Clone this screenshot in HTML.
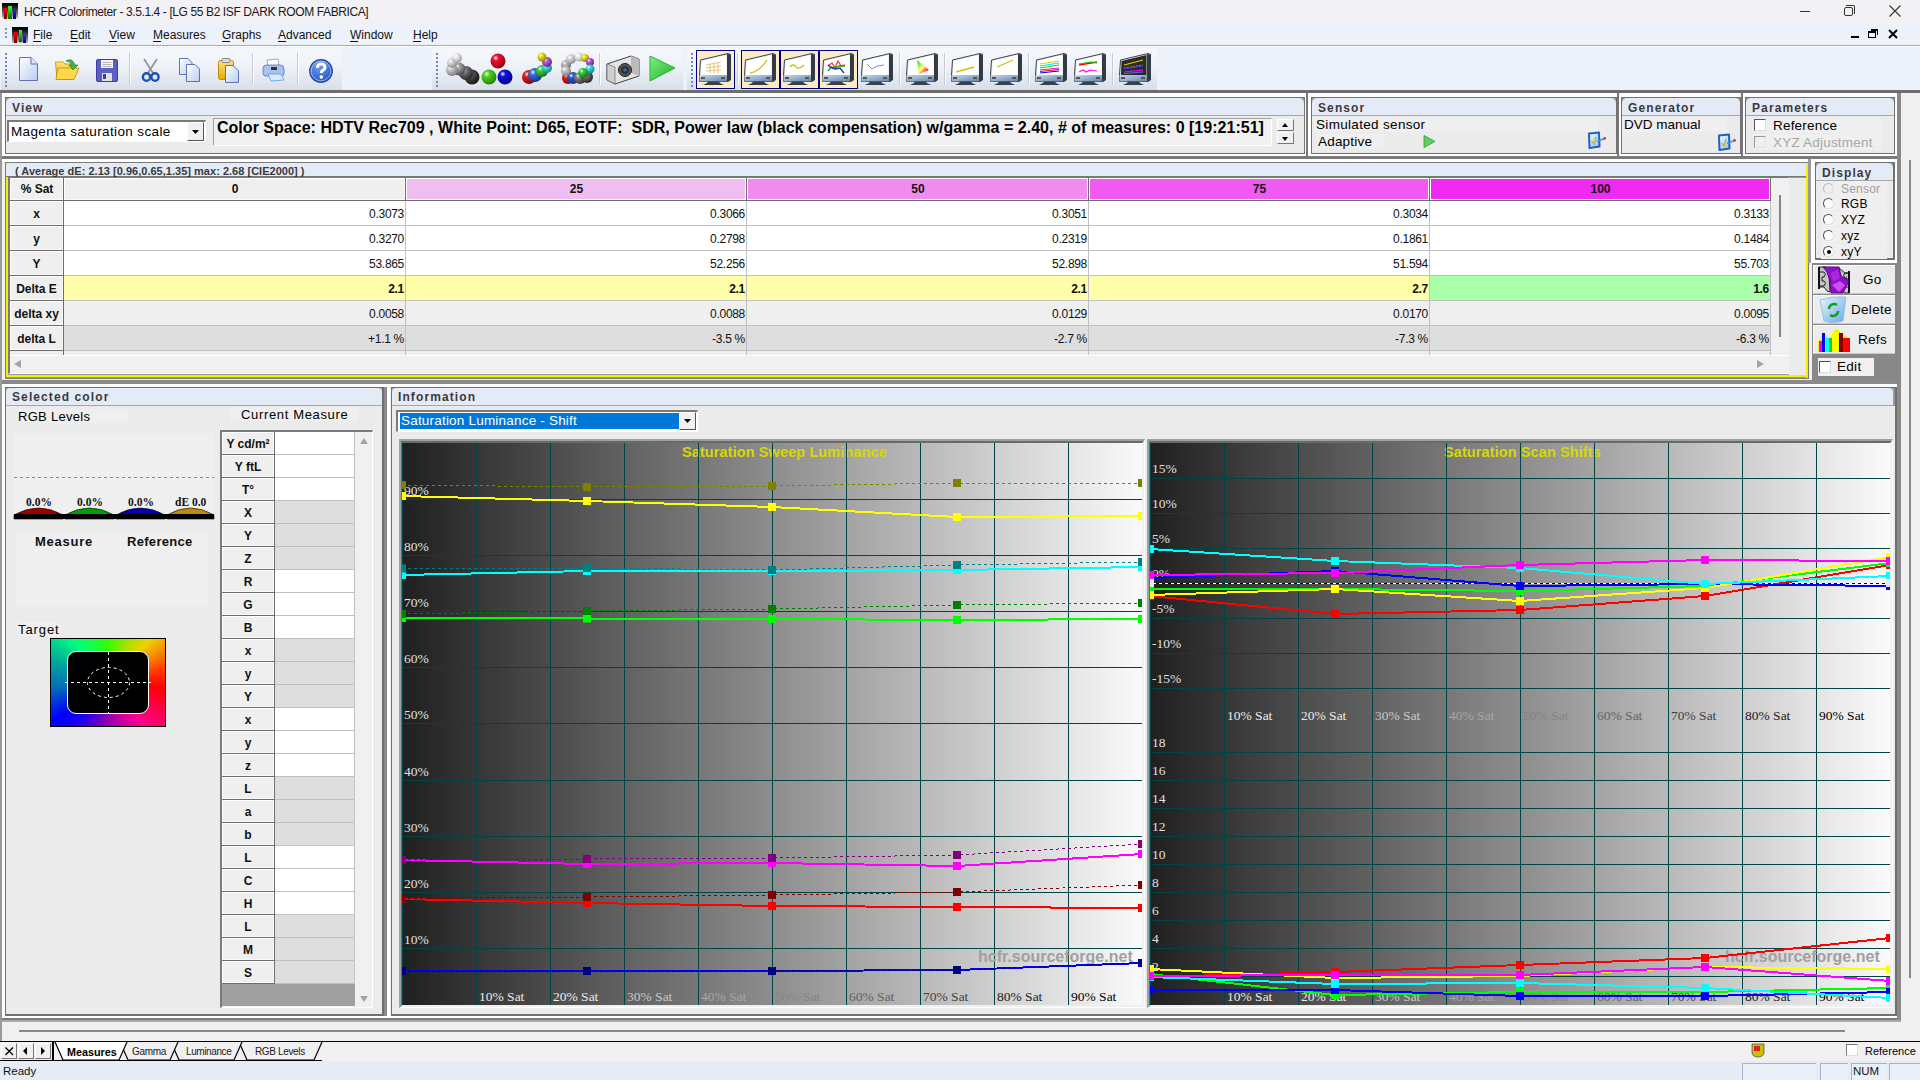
<!DOCTYPE html>
<html><head><meta charset="utf-8">
<style>
*{margin:0;padding:0;box-sizing:border-box}
html,body{width:1920px;height:1080px;overflow:hidden;background:#f0f0f0;font-family:"Liberation Sans",sans-serif;color:#000}
.a{position:absolute}
.t{position:absolute;white-space:nowrap;line-height:1}
.b{font-weight:bold}
.ser{font-family:"Liberation Serif",serif}
.ph{position:absolute;background:#e4ebf6;border-bottom:1px solid #a0a0a0;border-radius:6px 6px 0 0}
.pht{position:absolute;white-space:nowrap;line-height:1;font-weight:bold;font-size:12px;color:#3a3a3a;letter-spacing:1.1px}
svg{position:absolute;overflow:visible}
</style></head><body>

<div class="a" style="left:0;top:0;width:1920px;height:23px;background:#f2f1f4"></div>
<div class="a" style="left:2px;top:3px;width:16px;height:16px;background:linear-gradient(#000,#111 20%,rgba(0,0,0,0.35) 85%,rgba(0,0,0,0))">
<div class="a" style="left:2px;top:5px;width:3px;height:11px;background:linear-gradient(#f00,#700)"></div>
<div class="a" style="left:6px;top:3px;width:4px;height:13px;background:linear-gradient(#3f3,#060)"></div>
<div class="a" style="left:11px;top:6px;width:3px;height:10px;background:linear-gradient(#22f,#006)"></div></div>
<div class="t" style="left:24px;top:6px;font-size:12px;color:#1a1a1a;letter-spacing:-0.39px">HCFR Colorimeter - 3.5.1.4 - [LG 55 B2 ISF DARK ROOM FABRICA]</div>
<div class="a" style="left:1800px;top:11px;width:10px;height:1px;background:#333"></div>
<div class="a" style="left:1844px;top:7px;width:9px;height:9px;border:1px solid #333;border-radius:2px"></div><div class="a" style="left:1846px;top:5px;width:9px;height:9px;border-top:1px solid #333;border-right:1px solid #333;border-radius:0 2px 0 0"></div>
<svg style="left:1889px;top:5px" width="12" height="12"><path d="M0.5 0.5L11.5 11.5M11.5 0.5L0.5 11.5" stroke="#333" stroke-width="1.1"/></svg>
<div class="a" style="left:0;top:23px;width:1920px;height:22px;background:#edf2fa"></div>
<div class="a" style="left:0;top:45px;width:1920px;height:1px;background:#a9abae"></div>
<div class="a" style="left:0;top:46px;width:1920px;height:1px;background:#fff"></div>
<div class="a" style="left:5px;top:28px;width:2px;height:2px;background:#7a96c0"></div>
<div class="a" style="left:5px;top:32px;width:2px;height:2px;background:#7a96c0"></div>
<div class="a" style="left:5px;top:36px;width:2px;height:2px;background:#7a96c0"></div>
<div class="a" style="left:12px;top:27px;width:16px;height:16px;background:linear-gradient(#000,#111 20%,rgba(0,0,0,0.4) 85%,rgba(0,0,0,0.1))">
<div class="a" style="left:2px;top:5px;width:3px;height:11px;background:linear-gradient(#f00,#700)"></div>
<div class="a" style="left:7px;top:3px;width:3px;height:12px;background:linear-gradient(#3f3,#060)"></div>
<div class="a" style="left:11px;top:6px;width:3px;height:10px;background:linear-gradient(#33f,#008)"></div></div>
<div class="t" style="left:33px;top:29px;font-size:12px;color:#111;width:20px">File</div>
<div class="a" style="left:33px;top:41px;width:8px;height:1px;background:#111"></div>
<div class="t" style="left:70px;top:29px;font-size:12px;color:#111;width:22px">Edit</div>
<div class="a" style="left:70px;top:41px;width:8px;height:1px;background:#111"></div>
<div class="t" style="left:109px;top:29px;font-size:12px;color:#111;width:27px">View</div>
<div class="a" style="left:109px;top:41px;width:8px;height:1px;background:#111"></div>
<div class="t" style="left:153px;top:29px;font-size:12px;color:#111;width:52px">Measures</div>
<div class="a" style="left:153px;top:41px;width:8px;height:1px;background:#111"></div>
<div class="t" style="left:222px;top:29px;font-size:12px;color:#111;width:39px">Graphs</div>
<div class="a" style="left:222px;top:41px;width:8px;height:1px;background:#111"></div>
<div class="t" style="left:278px;top:29px;font-size:12px;color:#111;width:55px">Advanced</div>
<div class="a" style="left:278px;top:41px;width:8px;height:1px;background:#111"></div>
<div class="t" style="left:350px;top:29px;font-size:12px;color:#111;width:46px">Window</div>
<div class="a" style="left:350px;top:41px;width:8px;height:1px;background:#111"></div>
<div class="t" style="left:413px;top:29px;font-size:12px;color:#111;width:26px">Help</div>
<div class="a" style="left:413px;top:41px;width:8px;height:1px;background:#111"></div>
<div class="a" style="left:1851px;top:36px;width:8px;height:2px;background:#000"></div>
<div class="a" style="left:1868px;top:31px;width:8px;height:7px;border:1px solid #000;border-top-width:2px"></div><div class="a" style="left:1871px;top:29px;width:7px;height:6px;border-top:2px solid #000;border-right:1px solid #000"></div>
<svg style="left:1888px;top:29px" width="10" height="10"><path d="M1 1L9 9M9 1L1 9" stroke="#000" stroke-width="2"/></svg>
<div class="a" style="left:0;top:47px;width:1920px;height:43px;background:#edf2fa"></div>
<div class="a" style="left:1px;top:48px;width:341px;height:42px;border-radius:4px 4px 0 0;background:linear-gradient(#f5f7fb,#eef2f8 45%,#d8dee8)"></div>
<div class="a" style="left:432px;top:48px;width:251px;height:42px;border-radius:4px 4px 0 0;background:linear-gradient(#f5f7fb,#eef2f8 45%,#d8dee8)"></div>
<div class="a" style="left:687px;top:48px;width:470px;height:42px;border-radius:4px 4px 0 0;background:linear-gradient(#f5f7fb,#eef2f8 45%,#d8dee8)"></div>
<div class="a" style="left:5px;top:53px;width:2px;height:2px;background:#6a8ab8"></div>
<div class="a" style="left:5px;top:57px;width:2px;height:2px;background:#6a8ab8"></div>
<div class="a" style="left:5px;top:61px;width:2px;height:2px;background:#6a8ab8"></div>
<div class="a" style="left:5px;top:65px;width:2px;height:2px;background:#6a8ab8"></div>
<div class="a" style="left:5px;top:69px;width:2px;height:2px;background:#6a8ab8"></div>
<div class="a" style="left:5px;top:73px;width:2px;height:2px;background:#6a8ab8"></div>
<div class="a" style="left:5px;top:77px;width:2px;height:2px;background:#6a8ab8"></div>
<div class="a" style="left:5px;top:81px;width:2px;height:2px;background:#6a8ab8"></div>
<div class="a" style="left:5px;top:85px;width:2px;height:2px;background:#6a8ab8"></div>
<div class="a" style="left:436px;top:53px;width:2px;height:2px;background:#6a8ab8"></div>
<div class="a" style="left:436px;top:57px;width:2px;height:2px;background:#6a8ab8"></div>
<div class="a" style="left:436px;top:61px;width:2px;height:2px;background:#6a8ab8"></div>
<div class="a" style="left:436px;top:65px;width:2px;height:2px;background:#6a8ab8"></div>
<div class="a" style="left:436px;top:69px;width:2px;height:2px;background:#6a8ab8"></div>
<div class="a" style="left:436px;top:73px;width:2px;height:2px;background:#6a8ab8"></div>
<div class="a" style="left:436px;top:77px;width:2px;height:2px;background:#6a8ab8"></div>
<div class="a" style="left:436px;top:81px;width:2px;height:2px;background:#6a8ab8"></div>
<div class="a" style="left:436px;top:85px;width:2px;height:2px;background:#6a8ab8"></div>
<div class="a" style="left:691px;top:53px;width:2px;height:2px;background:#6a8ab8"></div>
<div class="a" style="left:691px;top:57px;width:2px;height:2px;background:#6a8ab8"></div>
<div class="a" style="left:691px;top:61px;width:2px;height:2px;background:#6a8ab8"></div>
<div class="a" style="left:691px;top:65px;width:2px;height:2px;background:#6a8ab8"></div>
<div class="a" style="left:691px;top:69px;width:2px;height:2px;background:#6a8ab8"></div>
<div class="a" style="left:691px;top:73px;width:2px;height:2px;background:#6a8ab8"></div>
<div class="a" style="left:691px;top:77px;width:2px;height:2px;background:#6a8ab8"></div>
<div class="a" style="left:691px;top:81px;width:2px;height:2px;background:#6a8ab8"></div>
<div class="a" style="left:691px;top:85px;width:2px;height:2px;background:#6a8ab8"></div>
<div class="a" style="left:129px;top:53px;width:1px;height:32px;background:#c5cad3"></div><div class="a" style="left:130px;top:53px;width:1px;height:32px;background:#fff"></div>
<div class="a" style="left:252px;top:53px;width:1px;height:32px;background:#c5cad3"></div><div class="a" style="left:253px;top:53px;width:1px;height:32px;background:#fff"></div>
<div class="a" style="left:297px;top:53px;width:1px;height:32px;background:#c5cad3"></div><div class="a" style="left:298px;top:53px;width:1px;height:32px;background:#fff"></div>
<div class="a" style="left:599px;top:53px;width:1px;height:32px;background:#c5cad3"></div><div class="a" style="left:600px;top:53px;width:1px;height:32px;background:#fff"></div>
<div class="a" style="left:737px;top:53px;width:1px;height:32px;background:#c5cad3"></div><div class="a" style="left:738px;top:53px;width:1px;height:32px;background:#fff"></div>
<div class="a" style="left:899px;top:53px;width:1px;height:32px;background:#c5cad3"></div><div class="a" style="left:900px;top:53px;width:1px;height:32px;background:#fff"></div>
<div class="a" style="left:944px;top:53px;width:1px;height:32px;background:#c5cad3"></div><div class="a" style="left:945px;top:53px;width:1px;height:32px;background:#fff"></div>
<div class="a" style="left:1028px;top:53px;width:1px;height:32px;background:#c5cad3"></div><div class="a" style="left:1029px;top:53px;width:1px;height:32px;background:#fff"></div>
<div class="a" style="left:1112px;top:53px;width:1px;height:32px;background:#c5cad3"></div><div class="a" style="left:1113px;top:53px;width:1px;height:32px;background:#fff"></div>
<div class="a" style="left:0;top:90px;width:1920px;height:3px;background:#6e6e6e"></div>
<div class="a" style="left:0;top:93px;width:1920px;height:3px;background:#fff"></div>
<svg style="left:0;top:0" width="0" height="0"><defs><linearGradient id="mbase" x1="0" y1="0" x2="1" y2="1"><stop offset="0" stop-color="#c8d8ea"/><stop offset="1" stop-color="#5f84b0"/></linearGradient><linearGradient id="pg" x1="0" y1="0" x2="1" y2="1"><stop offset="0" stop-color="#fff"/><stop offset="1" stop-color="#b9cdf2"/></linearGradient><linearGradient id="fold" x1="0" y1="0" x2="0" y2="1"><stop offset="0" stop-color="#ffe67a"/><stop offset="1" stop-color="#e8a800"/></linearGradient></defs></svg>
<svg style="left:19px;top:57px" width="19" height="24"><path d="M0.5 0.5 H12 L18.5 7 V23.5 H0.5 Z" fill="url(#pg)" stroke="#5d74b4"/><path d="M12 0.5 V7 H18.5" fill="#dde6f8" stroke="#5d74b4"/></svg>
<svg style="left:55px;top:58px" width="25" height="23"><path d="M0.5 4 H8 L10 6 H18 V21.5 H2 Z" fill="url(#fold)" stroke="#c08a00" stroke-width="0.8"/><path d="M3 10 H24 L19 21.5 H1 Z" fill="#ffd84a" stroke="#c08a00" stroke-width="0.8"/><path d="M11 3 Q17 -1 20 7 L23 7 L18 12 L14 7 L17 7 Q15 3 11 3Z" fill="#3cb83c" stroke="#1a7a1a" stroke-width="0.6"/></svg>
<svg style="left:96px;top:59px" width="22" height="23"><rect x="0.5" y="0.5" width="21" height="22" rx="1.5" fill="#5a5fc8" stroke="#3b3f9a"/><rect x="5" y="1" width="12" height="8" fill="#f4f4f4"/><path d="M6.5 3.5H15.5M6.5 5.5H15.5M6.5 7.5H15.5" stroke="#9a9a9a" stroke-width="0.7"/><rect x="6" y="14" width="10" height="8" fill="#e0e0e0"/><rect x="7" y="15" width="3" height="5" fill="#3b3f9a"/></svg>
<svg style="left:142px;top:59px" width="18" height="23"><path d="M2 0 L11 14 M15 0 L6 14" stroke="#8a92a0" stroke-width="1.6"/><ellipse cx="4.5" cy="18" rx="3.6" ry="3.8" fill="none" stroke="#1b4fb8" stroke-width="2.4"/><ellipse cx="13" cy="18" rx="3.6" ry="3.8" fill="none" stroke="#1b4fb8" stroke-width="2.4"/></svg>
<svg style="left:179px;top:58px" width="22" height="24"><path d="M0.5 0.5H9L13 4.5V16.5H0.5Z" fill="url(#pg)" stroke="#5d74b4"/><path d="M7.5 6.5H16L20.5 11V23.5H7.5Z" fill="url(#pg)" stroke="#5d74b4"/></svg>
<svg style="left:218px;top:58px" width="22" height="25"><rect x="0.5" y="2.5" width="15" height="19" rx="2" fill="url(#fold)" stroke="#b88a10"/><rect x="4" y="0.5" width="8" height="4" rx="1" fill="#ddd" stroke="#888"/><path d="M7.5 7.5H15L20.5 13V24.5H7.5Z" fill="url(#pg)" stroke="#5d74b4"/></svg>
<svg style="left:262px;top:59px" width="24" height="23"><path d="M5 1 L16 0 L17 7 L6 8Z" fill="#fff" stroke="#888" stroke-width="0.7"/><path d="M1 9 Q1 6 5 6 H18 Q22 6 22 10 V15 Q22 17 19 17 H4 Q1 17 1 14Z" fill="#a9c2ef" stroke="#4f72b8" stroke-width="0.8"/><rect x="9" y="8" width="6" height="3" fill="#333"/><path d="M6 15 L19 15 L22 21 L9 22Z" fill="#d8ecff" stroke="#4f9fe0" stroke-width="0.8"/></svg>
<svg style="left:309px;top:59px" width="25" height="25"><defs><radialGradient id="hg" cx="0.4" cy="0.3" r="0.8"><stop offset="0" stop-color="#6a9cf0"/><stop offset="1" stop-color="#1f4fbf"/></radialGradient></defs><circle cx="12" cy="12" r="11.3" fill="url(#hg)" stroke="#2a4a9a" stroke-width="1.2"/><circle cx="12" cy="12" r="9.8" fill="none" stroke="#fff" stroke-width="0.8" opacity="0.6"/><path d="M8.3 8.8 Q8.5 5 12.2 5 Q16 5 16 8.3 Q16 10.5 13.4 11.6 Q12.3 12.2 12.3 14" fill="none" stroke="#fff" stroke-width="3"/><circle cx="12.3" cy="18" r="1.8" fill="#fff"/></svg>
<svg style="left:442px;top:52px" width="36" height="34"><defs><radialGradient id="g3678" cx="0.35" cy="0.3" r="0.75"><stop offset="0" stop-color="#fff"/><stop offset="0.25" stop-color="#555"/><stop offset="1" stop-color="#111"/></radialGradient></defs><circle cx="30" cy="25" r="7.5" fill="url(#g3678)"/><defs><radialGradient id="g47853" cx="0.35" cy="0.3" r="0.75"><stop offset="0" stop-color="#fff"/><stop offset="0.25" stop-color="#777"/><stop offset="1" stop-color="#222"/></radialGradient></defs><circle cx="24" cy="21" r="7" fill="url(#g47853)"/><defs><radialGradient id="g37677" cx="0.35" cy="0.3" r="0.75"><stop offset="0" stop-color="#fff"/><stop offset="0.25" stop-color="#aaa"/><stop offset="1" stop-color="#444"/></radialGradient></defs><circle cx="17" cy="17" r="6.5" fill="url(#g37677)"/><defs><radialGradient id="g56609" cx="0.35" cy="0.3" r="0.75"><stop offset="0" stop-color="#fff"/><stop offset="0.25" stop-color="#ccc"/><stop offset="1" stop-color="#777"/></radialGradient></defs><circle cx="10" cy="18" r="6" fill="url(#g56609)"/><defs><radialGradient id="g16048" cx="0.35" cy="0.3" r="0.75"><stop offset="0" stop-color="#fff"/><stop offset="0.25" stop-color="#ddd"/><stop offset="1" stop-color="#888"/></radialGradient></defs><circle cx="10" cy="11" r="5" fill="url(#g16048)"/><defs><radialGradient id="g84659" cx="0.35" cy="0.3" r="0.75"><stop offset="0" stop-color="#fff"/><stop offset="0.25" stop-color="#eee"/><stop offset="1" stop-color="#999"/></radialGradient></defs><circle cx="15" cy="6" r="5" fill="url(#g84659)"/></svg>
<svg style="left:481px;top:52px" width="34" height="34"><defs><radialGradient id="g61041" cx="0.35" cy="0.3" r="0.75"><stop offset="0" stop-color="#fff"/><stop offset="0.25" stop-color="#f01030"/><stop offset="1" stop-color="#900010"/></radialGradient></defs><circle cx="17" cy="9" r="7.5" fill="url(#g61041)"/><defs><radialGradient id="g61396" cx="0.35" cy="0.3" r="0.75"><stop offset="0" stop-color="#fff"/><stop offset="0.25" stop-color="#50d020"/><stop offset="1" stop-color="#208000"/></radialGradient></defs><circle cx="8" cy="25" r="7.5" fill="url(#g61396)"/><defs><radialGradient id="g81704" cx="0.35" cy="0.3" r="0.75"><stop offset="0" stop-color="#fff"/><stop offset="0.25" stop-color="#1010e0"/><stop offset="1" stop-color="#000080"/></radialGradient></defs><circle cx="24" cy="25" r="7.5" fill="url(#g81704)"/></svg>
<svg style="left:520px;top:52px" width="37" height="34"><defs><radialGradient id="g84399" cx="0.35" cy="0.3" r="0.75"><stop offset="0" stop-color="#fff"/><stop offset="0.25" stop-color="#e02020"/><stop offset="1" stop-color="#800000"/></radialGradient></defs><circle cx="9" cy="25" r="7" fill="url(#g84399)"/><defs><radialGradient id="g64444" cx="0.35" cy="0.3" r="0.75"><stop offset="0" stop-color="#fff"/><stop offset="0.25" stop-color="#3a70e0"/><stop offset="1" stop-color="#103080"/></radialGradient></defs><circle cx="15" cy="23" r="7" fill="url(#g64444)"/><defs><radialGradient id="g37945" cx="0.35" cy="0.3" r="0.75"><stop offset="0" stop-color="#fff"/><stop offset="0.25" stop-color="#40d040"/><stop offset="1" stop-color="#107010"/></radialGradient></defs><circle cx="22" cy="19" r="6" fill="url(#g37945)"/><defs><radialGradient id="g72502" cx="0.35" cy="0.3" r="0.75"><stop offset="0" stop-color="#fff"/><stop offset="0.25" stop-color="#40e0e0"/><stop offset="1" stop-color="#108080"/></radialGradient></defs><circle cx="27" cy="16" r="5" fill="url(#g72502)"/><defs><radialGradient id="g38570" cx="0.35" cy="0.3" r="0.75"><stop offset="0" stop-color="#fff"/><stop offset="0.25" stop-color="#c060e0"/><stop offset="1" stop-color="#602080"/></radialGradient></defs><circle cx="27" cy="10" r="5" fill="url(#g38570)"/><defs><radialGradient id="g278" cx="0.35" cy="0.3" r="0.75"><stop offset="0" stop-color="#fff"/><stop offset="0.25" stop-color="#f0e020"/><stop offset="1" stop-color="#908000"/></radialGradient></defs><circle cx="22" cy="5" r="4.5" fill="url(#g278)"/></svg>
<svg style="left:560px;top:52px" width="36" height="34"><defs><radialGradient id="g54082" cx="0.35" cy="0.3" r="0.75"><stop offset="0" stop-color="#fff"/><stop offset="0.25" stop-color="#e02020"/><stop offset="1" stop-color="#800000"/></radialGradient></defs><circle cx="8" cy="26" r="6" fill="url(#g54082)"/><defs><radialGradient id="g76423" cx="0.35" cy="0.3" r="0.75"><stop offset="0" stop-color="#fff"/><stop offset="0.25" stop-color="#2a5ad0"/><stop offset="1" stop-color="#103080"/></radialGradient></defs><circle cx="13" cy="26" r="6" fill="url(#g76423)"/><defs><radialGradient id="g45360" cx="0.35" cy="0.3" r="0.75"><stop offset="0" stop-color="#fff"/><stop offset="0.25" stop-color="#888"/><stop offset="1" stop-color="#333"/></radialGradient></defs><circle cx="20" cy="26" r="6" fill="url(#g45360)"/><defs><radialGradient id="g83090" cx="0.35" cy="0.3" r="0.75"><stop offset="0" stop-color="#fff"/><stop offset="0.25" stop-color="#777"/><stop offset="1" stop-color="#222"/></radialGradient></defs><circle cx="27" cy="25" r="6" fill="url(#g83090)"/><defs><radialGradient id="g88372" cx="0.35" cy="0.3" r="0.75"><stop offset="0" stop-color="#fff"/><stop offset="0.25" stop-color="#bbb"/><stop offset="1" stop-color="#666"/></radialGradient></defs><circle cx="6" cy="13" r="5" fill="url(#g88372)"/><defs><radialGradient id="g37034" cx="0.35" cy="0.3" r="0.75"><stop offset="0" stop-color="#fff"/><stop offset="0.25" stop-color="#ccc"/><stop offset="1" stop-color="#777"/></radialGradient></defs><circle cx="6" cy="19" r="5" fill="url(#g37034)"/><defs><radialGradient id="g89065" cx="0.35" cy="0.3" r="0.75"><stop offset="0" stop-color="#fff"/><stop offset="0.25" stop-color="#ddd"/><stop offset="1" stop-color="#888"/></radialGradient></defs><circle cx="11" cy="7" r="5" fill="url(#g89065)"/><defs><radialGradient id="g44898" cx="0.35" cy="0.3" r="0.75"><stop offset="0" stop-color="#fff"/><stop offset="0.25" stop-color="#eee"/><stop offset="1" stop-color="#aaa"/></radialGradient></defs><circle cx="19" cy="5" r="4.5" fill="url(#g44898)"/><defs><radialGradient id="g16716" cx="0.35" cy="0.3" r="0.75"><stop offset="0" stop-color="#fff"/><stop offset="0.25" stop-color="#f0e020"/><stop offset="1" stop-color="#908000"/></radialGradient></defs><circle cx="25" cy="6" r="4" fill="url(#g16716)"/><defs><radialGradient id="g6632" cx="0.35" cy="0.3" r="0.75"><stop offset="0" stop-color="#fff"/><stop offset="0.25" stop-color="#c060e0"/><stop offset="1" stop-color="#602080"/></radialGradient></defs><circle cx="30" cy="10" r="4" fill="url(#g6632)"/><defs><radialGradient id="g98078" cx="0.35" cy="0.3" r="0.75"><stop offset="0" stop-color="#fff"/><stop offset="0.25" stop-color="#40e0e0"/><stop offset="1" stop-color="#108080"/></radialGradient></defs><circle cx="30" cy="17" r="4.5" fill="url(#g98078)"/><defs><radialGradient id="g42491" cx="0.35" cy="0.3" r="0.75"><stop offset="0" stop-color="#fff"/><stop offset="0.25" stop-color="#40d040"/><stop offset="1" stop-color="#107010"/></radialGradient></defs><circle cx="23" cy="21" r="5" fill="url(#g42491)"/></svg>
<svg style="left:606px;top:55px" width="34" height="30"><path d="M1 9 L25 1 L33 4 L33 21 L9 29 L1 25Z" fill="#e4e4e4" stroke="#444" stroke-width="1"/><path d="M25 1 L33 4 L33 21 L25 18Z" fill="#bbb"/><path d="M1 9 L9 12 L9 29 L1 25Z" fill="#cfcfcf" stroke="#555" stroke-width="0.6"/><circle cx="19" cy="15" r="6.5" fill="#555" stroke="#222"/><circle cx="19" cy="15" r="4" fill="#333"/><circle cx="19" cy="15" r="1.7" fill="#2a6ad8"/></svg>
<svg style="left:649px;top:55px" width="28" height="27"><defs><linearGradient id="plg" x1="0" y1="0" x2="1" y2="1"><stop offset="0" stop-color="#7ef07e"/><stop offset="1" stop-color="#1fae2a"/></linearGradient></defs><path d="M1 1 L26 13 L1 26Z" fill="url(#plg)" stroke="#2bb036" stroke-width="1"/></svg>
<svg style="left:0;top:0" width="0" height="0"><defs><linearGradient id="cie" x1="0" y1="0" x2="1" y2="1"><stop offset="0" stop-color="#00e000"/><stop offset="0.5" stop-color="#ffff80"/><stop offset="0.8" stop-color="#ff2020"/><stop offset="1" stop-color="#2020ff"/></linearGradient></defs></svg>
<div class="a" style="left:696px;top:50px;width:39px;height:39px;border:1.5px solid #000080;background:#fdebc6"></div><svg style="left:698px;top:53px" width="34" height="33" viewBox="0 0 34 33"><path d="M2.5 7 L30 0.5 L32.5 1.5 L32.5 27 L30 28.5 L1.5 28.5 L1.5 22 Z" fill="#dfe6ee" stroke="#3c434c" stroke-width="1"/><path d="M29 1 L32.5 1.5 L32.5 27 L29 28.5 Z" fill="#343a42"/><path d="M3.5 8 L28.5 2 L28.5 22 L3 22 Z" fill="#fff"/><path d="M1.5 22 L29 22 L29 28.5 L1.5 28.5 Z" fill="url(#mbase)"/><rect x="3" y="24" width="4" height="2" fill="#555"/><rect x="23" y="24" width="4" height="2" fill="#555"/><path d="M10 28.5 L21 28.5 L22 30 L26 32 L5 32 L9 30 Z" fill="#3a4048"/><g stroke="#e8c68a" stroke-width="1.2"><path d="M8 12L23 9M8 15L23 13M8 18L23 17"/><path d="M12 11V20M16 10V20M20 9V20"/></g></svg>
<div class="a" style="left:741px;top:50px;width:39px;height:39px;border:1.5px solid #000080;background:#fdebc6"></div><svg style="left:743px;top:53px" width="34" height="33" viewBox="0 0 34 33"><path d="M2.5 7 L30 0.5 L32.5 1.5 L32.5 27 L30 28.5 L1.5 28.5 L1.5 22 Z" fill="#dfe6ee" stroke="#3c434c" stroke-width="1"/><path d="M29 1 L32.5 1.5 L32.5 27 L29 28.5 Z" fill="#343a42"/><path d="M3.5 8 L28.5 2 L28.5 22 L3 22 Z" fill="#fff"/><path d="M1.5 22 L29 22 L29 28.5 L1.5 28.5 Z" fill="url(#mbase)"/><rect x="3" y="24" width="4" height="2" fill="#555"/><rect x="23" y="24" width="4" height="2" fill="#555"/><path d="M10 28.5 L21 28.5 L22 30 L26 32 L5 32 L9 30 Z" fill="#3a4048"/><path d="M7 20 Q16 19 24 7" fill="none" stroke="#d0c000" stroke-width="1.3"/></svg>
<div class="a" style="left:780px;top:50px;width:39px;height:39px;border:1.5px solid #000080;background:#fdebc6"></div><svg style="left:782px;top:53px" width="34" height="33" viewBox="0 0 34 33"><path d="M2.5 7 L30 0.5 L32.5 1.5 L32.5 27 L30 28.5 L1.5 28.5 L1.5 22 Z" fill="#dfe6ee" stroke="#3c434c" stroke-width="1"/><path d="M29 1 L32.5 1.5 L32.5 27 L29 28.5 Z" fill="#343a42"/><path d="M3.5 8 L28.5 2 L28.5 22 L3 22 Z" fill="#fff"/><path d="M1.5 22 L29 22 L29 28.5 L1.5 28.5 Z" fill="url(#mbase)"/><rect x="3" y="24" width="4" height="2" fill="#555"/><rect x="23" y="24" width="4" height="2" fill="#555"/><path d="M10 28.5 L21 28.5 L22 30 L26 32 L5 32 L9 30 Z" fill="#3a4048"/><path d="M8 14 Q11 10 14 14 Q17 17 22 12" fill="none" stroke="#d0c000" stroke-width="1.3"/></svg>
<div class="a" style="left:819px;top:50px;width:39px;height:39px;border:1.5px solid #000080;background:#fdebc6"></div><svg style="left:821px;top:53px" width="34" height="33" viewBox="0 0 34 33"><path d="M2.5 7 L30 0.5 L32.5 1.5 L32.5 27 L30 28.5 L1.5 28.5 L1.5 22 Z" fill="#dfe6ee" stroke="#3c434c" stroke-width="1"/><path d="M29 1 L32.5 1.5 L32.5 27 L29 28.5 Z" fill="#343a42"/><path d="M3.5 8 L28.5 2 L28.5 22 L3 22 Z" fill="#fff"/><path d="M1.5 22 L29 22 L29 28.5 L1.5 28.5 Z" fill="url(#mbase)"/><rect x="3" y="24" width="4" height="2" fill="#555"/><rect x="23" y="24" width="4" height="2" fill="#555"/><path d="M10 28.5 L21 28.5 L22 30 L26 32 L5 32 L9 30 Z" fill="#3a4048"/><path d="M7 13 L11 10 L14 15 L17 8 L20 13 L24 12" fill="none" stroke="#e05020" stroke-width="1.4"/><path d="M7 18 L10 14 L14 15 L18 13 L24 13" fill="none" stroke="#20a020" stroke-width="1.4"/><path d="M7 12 L11 15 L15 16 L19 15 L23 20" fill="none" stroke="#1a3ab0" stroke-width="1.4"/></svg>
<svg style="left:860px;top:53px" width="34" height="33" viewBox="0 0 34 33"><path d="M2.5 7 L30 0.5 L32.5 1.5 L32.5 27 L30 28.5 L1.5 28.5 L1.5 22 Z" fill="#dfe6ee" stroke="#3c434c" stroke-width="1"/><path d="M29 1 L32.5 1.5 L32.5 27 L29 28.5 Z" fill="#343a42"/><path d="M3.5 8 L28.5 2 L28.5 22 L3 22 Z" fill="#fff"/><path d="M1.5 22 L29 22 L29 28.5 L1.5 28.5 Z" fill="url(#mbase)"/><rect x="3" y="24" width="4" height="2" fill="#555"/><rect x="23" y="24" width="4" height="2" fill="#555"/><path d="M10 28.5 L21 28.5 L22 30 L26 32 L5 32 L9 30 Z" fill="#3a4048"/><path d="M7 11 L12 16 L17 13 L24 12" fill="none" stroke="#8070d0" stroke-width="0.9"/></svg>
<svg style="left:905px;top:53px" width="34" height="33" viewBox="0 0 34 33"><path d="M2.5 7 L30 0.5 L32.5 1.5 L32.5 27 L30 28.5 L1.5 28.5 L1.5 22 Z" fill="#dfe6ee" stroke="#3c434c" stroke-width="1"/><path d="M29 1 L32.5 1.5 L32.5 27 L29 28.5 Z" fill="#343a42"/><path d="M3.5 8 L28.5 2 L28.5 22 L3 22 Z" fill="#fff"/><path d="M1.5 22 L29 22 L29 28.5 L1.5 28.5 Z" fill="url(#mbase)"/><rect x="3" y="24" width="4" height="2" fill="#555"/><rect x="23" y="24" width="4" height="2" fill="#555"/><path d="M10 28.5 L21 28.5 L22 30 L26 32 L5 32 L9 30 Z" fill="#3a4048"/><path d="M12 7 L24 17 L14 21Z" fill="url(#cie)"/></svg>
<svg style="left:950px;top:53px" width="34" height="33" viewBox="0 0 34 33"><path d="M2.5 7 L30 0.5 L32.5 1.5 L32.5 27 L30 28.5 L1.5 28.5 L1.5 22 Z" fill="#dfe6ee" stroke="#3c434c" stroke-width="1"/><path d="M29 1 L32.5 1.5 L32.5 27 L29 28.5 Z" fill="#343a42"/><path d="M3.5 8 L28.5 2 L28.5 22 L3 22 Z" fill="#fff"/><path d="M1.5 22 L29 22 L29 28.5 L1.5 28.5 Z" fill="url(#mbase)"/><rect x="3" y="24" width="4" height="2" fill="#555"/><rect x="23" y="24" width="4" height="2" fill="#555"/><path d="M10 28.5 L21 28.5 L22 30 L26 32 L5 32 L9 30 Z" fill="#3a4048"/><path d="M6 19 L24 14" stroke="#d0c000" stroke-width="1.3"/></svg>
<svg style="left:989px;top:53px" width="34" height="33" viewBox="0 0 34 33"><path d="M2.5 7 L30 0.5 L32.5 1.5 L32.5 27 L30 28.5 L1.5 28.5 L1.5 22 Z" fill="#dfe6ee" stroke="#3c434c" stroke-width="1"/><path d="M29 1 L32.5 1.5 L32.5 27 L29 28.5 Z" fill="#343a42"/><path d="M3.5 8 L28.5 2 L28.5 22 L3 22 Z" fill="#fff"/><path d="M1.5 22 L29 22 L29 28.5 L1.5 28.5 Z" fill="url(#mbase)"/><rect x="3" y="24" width="4" height="2" fill="#555"/><rect x="23" y="24" width="4" height="2" fill="#555"/><path d="M10 28.5 L21 28.5 L22 30 L26 32 L5 32 L9 30 Z" fill="#3a4048"/><path d="M8 14 L24 7" stroke="#d0c000" stroke-width="1.3"/></svg>
<svg style="left:1034px;top:53px" width="34" height="33" viewBox="0 0 34 33"><path d="M2.5 7 L30 0.5 L32.5 1.5 L32.5 27 L30 28.5 L1.5 28.5 L1.5 22 Z" fill="#dfe6ee" stroke="#3c434c" stroke-width="1"/><path d="M29 1 L32.5 1.5 L32.5 27 L29 28.5 Z" fill="#343a42"/><path d="M3.5 8 L28.5 2 L28.5 22 L3 22 Z" fill="#fff"/><path d="M1.5 22 L29 22 L29 28.5 L1.5 28.5 Z" fill="url(#mbase)"/><rect x="3" y="24" width="4" height="2" fill="#555"/><rect x="23" y="24" width="4" height="2" fill="#555"/><path d="M10 28.5 L21 28.5 L22 30 L26 32 L5 32 L9 30 Z" fill="#3a4048"/><g stroke-width="1.1" fill="none"><path d="M6 11L25 8" stroke="#e0d000"/><path d="M6 13L25 10" stroke="#00e0ff"/><path d="M6 15L25 12" stroke="#00e000"/><path d="M6 17L25 15" stroke="#ff00ff"/><path d="M6 18.5L25 16.5" stroke="#ff0000"/><path d="M6 20L25 18" stroke="#0000ff"/></g></svg>
<svg style="left:1073px;top:53px" width="34" height="33" viewBox="0 0 34 33"><path d="M2.5 7 L30 0.5 L32.5 1.5 L32.5 27 L30 28.5 L1.5 28.5 L1.5 22 Z" fill="#dfe6ee" stroke="#3c434c" stroke-width="1"/><path d="M29 1 L32.5 1.5 L32.5 27 L29 28.5 Z" fill="#343a42"/><path d="M3.5 8 L28.5 2 L28.5 22 L3 22 Z" fill="#fff"/><path d="M1.5 22 L29 22 L29 28.5 L1.5 28.5 Z" fill="url(#mbase)"/><rect x="3" y="24" width="4" height="2" fill="#555"/><rect x="23" y="24" width="4" height="2" fill="#555"/><path d="M10 28.5 L21 28.5 L22 30 L26 32 L5 32 L9 30 Z" fill="#3a4048"/><path d="M6 12 L12 11 L18 10 L24 9" stroke="#ff0000" stroke-width="1.6" fill="none"/><path d="M6 11 L12 10 L18 9 L24 10" stroke="#00c000" stroke-width="1" fill="none"/><path d="M6 19 L10 17 L13 19 L17 17 L24 18" stroke="#ff00ff" stroke-width="1.2" fill="none"/></svg>
<svg style="left:1118px;top:53px" width="34" height="33" viewBox="0 0 34 33"><path d="M2.5 7 L30 0.5 L32.5 1.5 L32.5 27 L30 28.5 L1.5 28.5 L1.5 22 Z" fill="#dfe6ee" stroke="#3c434c" stroke-width="1"/><path d="M29 1 L32.5 1.5 L32.5 27 L29 28.5 Z" fill="#343a42"/><path d="M3.5 8 L28.5 2 L28.5 22 L3 22 Z" fill="#2a2a2a"/><path d="M1.5 22 L29 22 L29 28.5 L1.5 28.5 Z" fill="url(#mbase)"/><rect x="3" y="24" width="4" height="2" fill="#555"/><rect x="23" y="24" width="4" height="2" fill="#555"/><path d="M10 28.5 L21 28.5 L22 30 L26 32 L5 32 L9 30 Z" fill="#3a4048"/><g stroke-width="1.1" fill="none"><path d="M6 12L25 7" stroke="#e0d000"/><path d="M6 15L25 12" stroke="#e07020" stroke-dasharray="2 1"/><path d="M6 16L25 13" stroke="#2040ff"/><path d="M6 19L25 17" stroke="#ff00ff"/><path d="M6 20.5L25 19" stroke="#6060ff"/></g></svg>
<div class="a" style="left:0;top:93px;width:1920px;height:66px;background:#fff"></div>
<div class="a" style="left:0;top:156px;width:1920px;height:3px;background:#7a7a7a"></div>
<div class="a" style="left:5px;top:97px;width:1300px;height:57px;border:1px solid #707070;background:#ebebeb;"></div><div class="a" style="left:6px;top:98px;width:1298px;height:18px;background:#9a9a9a"></div><div class="a" style="left:6px;top:98px;width:1298px;height:18px;background:#e4ebf6;border-bottom:1px solid #a6a6a6;border-radius:5px 5px 0 0"></div><div class="pht" style="left:12px;top:102px">View</div>
<div class="a" style="left:6px;top:116px;width:1298px;height:36px;background:#ebebeb"></div>
<div class="a" style="left:7px;top:120px;width:199px;height:22px;border-top:2px solid #7a7a7a;border-left:2px solid #7a7a7a;border-bottom:1px solid #fff;border-right:1px solid #fff;background:#fff"></div>
<div class="t" style="left:11px;top:125px;font-size:13.5px;color:#000;letter-spacing:0.37px">Magenta saturation scale</div>
<div class="a" style="left:187px;top:122px;width:17px;height:19px;background:#f0f0f0;border-right:1px solid #555;border-bottom:1px solid #555;border-top:1px solid #fff;border-left:1px solid #fff"></div>
<svg style="left:192px;top:130px" width="8" height="4"><path d="M0 0H7L3.5 4Z" fill="#000"/></svg>
<div class="a" style="left:213px;top:118px;width:59px;height:28px;background:#f0f0f0"></div>
<div class="a" style="left:213px;top:118px;width:1059px;height:28px;border-top:1px solid #a0a0a0;border-left:1px solid #a0a0a0;border-bottom:1px solid #fff;border-right:1px solid #fff;background:#f0f0f0"></div>
<div class="t b" style="left:217px;top:120px;font-size:16px;color:#000;letter-spacing:0.02px">Color Space: HDTV Rec709 , White Point: D65, EOTF:&nbsp; SDR, Power law (black compensation) w/gamma = 2.40, # of measures: 0 [19:21:51]</div>
<div class="a" style="left:1277px;top:119px;width:17px;height:12px;background:#f0f0f0;border-right:1px solid #777;border-bottom:1px solid #777;border-top:1px solid #fff;border-left:1px solid #fff"></div>
<div class="a" style="left:1277px;top:132px;width:17px;height:12px;background:#f0f0f0;border-right:1px solid #777;border-bottom:1px solid #777;border-top:1px solid #fff;border-left:1px solid #fff"></div>
<svg style="left:1282px;top:123px" width="7" height="4"><path d="M0 4H6L3 0Z" fill="#000"/></svg>
<svg style="left:1282px;top:137px" width="7" height="4"><path d="M0 0H6L3 4Z" fill="#000"/></svg>
<div class="a" style="left:1306px;top:93px;width:2px;height:63px;background:#777"></div>
<div class="a" style="left:1617px;top:93px;width:2px;height:63px;background:#777"></div>
<div class="a" style="left:1741px;top:93px;width:2px;height:63px;background:#777"></div>
<div class="a" style="left:1311px;top:97px;width:306px;height:57px;border:1px solid #707070;background:#ebebeb;"></div><div class="a" style="left:1312px;top:98px;width:304px;height:18px;background:#9a9a9a"></div><div class="a" style="left:1312px;top:98px;width:304px;height:18px;background:#e4ebf6;border-bottom:1px solid #a6a6a6;border-radius:5px 5px 0 0"></div><div class="pht" style="left:1318px;top:102px">Sensor</div>
<div class="a" style="left:1312px;top:116px;width:304px;height:36px;background:#ebebeb"></div>
<div class="a" style="left:1314px;top:117px;width:284px;height:15px;background:#efefef"></div>
<div class="t" style="left:1316px;top:118px;font-size:13.5px;letter-spacing:0.32px">Simulated sensor</div>
<div class="a" style="left:1316px;top:134px;width:68px;height:15px;background:#efefef"></div>
<div class="t" style="left:1318px;top:135px;font-size:13.5px;letter-spacing:0.2px">Adaptive</div>
<svg style="left:1423px;top:135px" width="13" height="13"><path d="M1 0.5L12 6.5L1 12.5Z" fill="#5fd05f" stroke="#2ca02c" stroke-width="0.8"/></svg>
<svg style="left:1587px;top:131px" width="20" height="20"><defs><linearGradient id="edg" x1="0" y1="0" x2="1" y2="1"><stop offset="0" stop-color="#fff"/><stop offset="1" stop-color="#7cc4ff"/></linearGradient></defs><path d="M2 2.5 L12 1.5 L12.5 15.5 L2.5 17 Z" fill="url(#edg)" stroke="#1f5fc8" stroke-width="2" stroke-linejoin="round"/><path d="M4.5 10 L7 13 L9 6" stroke="#d8b040" stroke-width="1.6" fill="none"/><path d="M10 10.5 L17.5 7.5" stroke="#4a90e0" stroke-width="1.6"/><circle cx="17.6" cy="7.4" r="1.4" fill="#d04020"/></svg>
<div class="a" style="left:1621px;top:97px;width:120px;height:57px;border:1px solid #707070;background:#ebebeb;"></div><div class="a" style="left:1622px;top:98px;width:118px;height:18px;background:#9a9a9a"></div><div class="a" style="left:1622px;top:98px;width:118px;height:18px;background:#e4ebf6;border-bottom:1px solid #a6a6a6;border-radius:5px 5px 0 0"></div><div class="pht" style="left:1628px;top:102px">Generator</div>
<div class="a" style="left:1622px;top:116px;width:118px;height:36px;background:#ebebeb"></div>
<div class="a" style="left:1622px;top:117px;width:105px;height:15px;background:#efefef"></div>
<div class="t" style="left:1624px;top:118px;font-size:13.5px;letter-spacing:0px">DVD manual</div>
<svg style="left:1717px;top:133px" width="20" height="20"><defs><linearGradient id="edg" x1="0" y1="0" x2="1" y2="1"><stop offset="0" stop-color="#fff"/><stop offset="1" stop-color="#7cc4ff"/></linearGradient></defs><path d="M2 2.5 L12 1.5 L12.5 15.5 L2.5 17 Z" fill="url(#edg)" stroke="#1f5fc8" stroke-width="2" stroke-linejoin="round"/><path d="M4.5 10 L7 13 L9 6" stroke="#d8b040" stroke-width="1.6" fill="none"/><path d="M10 10.5 L17.5 7.5" stroke="#4a90e0" stroke-width="1.6"/><circle cx="17.6" cy="7.4" r="1.4" fill="#d04020"/></svg>
<div class="a" style="left:1745px;top:97px;width:150px;height:57px;border:1px solid #707070;background:#ebebeb;"></div><div class="a" style="left:1746px;top:98px;width:148px;height:18px;background:#9a9a9a"></div><div class="a" style="left:1746px;top:98px;width:148px;height:18px;background:#e4ebf6;border-bottom:1px solid #a6a6a6;border-radius:5px 5px 0 0"></div><div class="pht" style="left:1752px;top:102px">Parameters</div>
<div class="a" style="left:1746px;top:116px;width:148px;height:36px;background:#ebebeb"></div>
<div class="a" style="left:1755px;top:117px;width:127px;height:16px;background:#efefef"></div>
<div class="a" style="left:1754px;top:134px;width:128px;height:16px;background:#efefef"></div>
<div class="a" style="left:1754px;top:119px;width:12px;height:12px;background:#fff;border-top:1px solid #555;border-left:1px solid #555;border-right:1px solid #ddd;border-bottom:1px solid #ddd"></div>
<div class="t" style="left:1773px;top:119px;font-size:13.5px;letter-spacing:0.2px">Reference</div>
<div class="a" style="left:1754px;top:136px;width:12px;height:12px;background:#efefef;border-top:1px solid #999;border-left:1px solid #999;border-right:1px solid #e4e4e4;border-bottom:1px solid #e4e4e4"></div>
<div class="t" style="left:1773px;top:136px;font-size:13.5px;letter-spacing:0.2px;color:#a8a8a8">XYZ Adjustment</div>
<div class="a" style="left:1897px;top:93px;width:4px;height:66px;background:#888"></div>
<div class="a" style="left:0;top:159px;width:1920px;height:3px;background:#fff"></div>
<div class="a" style="left:0;top:93px;width:2px;height:948px;background:#9a9a9a"></div>
<div class="a" style="left:2px;top:162px;width:1897px;height:218px;background:#f0f0f0"></div>
<div class="a" style="left:5px;top:162px;width:1804px;height:217px;border:1px solid #7b7b7b;background:#9a9a9a"></div>
<div class="a" style="left:6px;top:163px;width:1802px;height:214px;border:2px solid #f0f000;border-top:none;border-radius:0 0 0 0"></div>
<div class="a" style="left:6px;top:163px;width:1802px;height:14px;background:#e4ebf6;border-radius:4px 4px 0 0;border-bottom:1px solid #777"></div>
<div class="a" style="left:1806px;top:165px;width:2px;height:213px;background:#f0f000"></div>
<div class="a" style="left:1789px;top:179px;width:18px;height:1px;background:#f0f000"></div>
<div class="t b" style="left:15px;top:166px;font-size:11px;color:#3a3a3a;letter-spacing:0.02px">( Average dE: 2.13 [0.96,0.65,1.35] max: 2.68 [CIE2000] )</div>
<div class="a" style="left:8px;top:177px;width:1781px;height:197px;border-left:2px solid #7b7b7b;border-top:1px solid #7b7b7b;border-right:1px solid #fff;border-bottom:1px solid #fff;background:#efefef"></div>
<div class="a" style="left:10px;top:178px;width:54px;height:23px;background:#efefef;border-right:1px solid #6d6d6d;border-bottom:1px solid #6d6d6d;box-shadow:inset 1px 1px 0 #fff,inset -1px -1px 0 #fafafa"></div>
<div class="t b" style="left:10px;top:183px;width:54px;text-align:center;font-size:12px;color:#111">% Sat</div>
<div class="a" style="left:64px;top:178px;width:342px;height:23px;background:#efefef;border-right:1px solid #6d6d6d;border-bottom:1px solid #6d6d6d;box-shadow:inset 1px 1px 0 #fff,inset -1px -1px 0 #fafafa"></div>
<div class="t b" style="left:64px;top:183px;width:342px;text-align:center;font-size:12px;color:#111">0</div>
<div class="a" style="left:406px;top:178px;width:341px;height:23px;background:#f0bdf0;border-right:1px solid #6d6d6d;border-bottom:1px solid #6d6d6d;box-shadow:inset 1px 1px 0 #fff,inset -1px -1px 0 #fafafa"></div>
<div class="t b" style="left:406px;top:183px;width:341px;text-align:center;font-size:12px;color:#111">25</div>
<div class="a" style="left:747px;top:178px;width:342px;height:23px;background:#f08cf0;border-right:1px solid #6d6d6d;border-bottom:1px solid #6d6d6d;box-shadow:inset 1px 1px 0 #fff,inset -1px -1px 0 #fafafa"></div>
<div class="t b" style="left:747px;top:183px;width:342px;text-align:center;font-size:12px;color:#111">50</div>
<div class="a" style="left:1089px;top:178px;width:341px;height:23px;background:#f05af0;border-right:1px solid #6d6d6d;border-bottom:1px solid #6d6d6d;box-shadow:inset 1px 1px 0 #fff,inset -1px -1px 0 #fafafa"></div>
<div class="t b" style="left:1089px;top:183px;width:341px;text-align:center;font-size:12px;color:#111">75</div>
<div class="a" style="left:1430px;top:178px;width:341px;height:23px;background:#f02af0;border-right:1px solid #6d6d6d;border-bottom:1px solid #6d6d6d;box-shadow:inset 1px 1px 0 #fff,inset -1px -1px 0 #fafafa"></div>
<div class="t b" style="left:1430px;top:183px;width:341px;text-align:center;font-size:12px;color:#111">100</div>
<div class="a" style="left:10px;top:201px;width:54px;height:25px;background:#efefef;border-right:1px solid #6d6d6d;border-bottom:1px solid #6d6d6d;box-shadow:inset 1px 1px 0 #fff,inset -1px -1px 0 #fafafa"></div>
<div class="t b" style="left:10px;top:208px;width:53px;text-align:center;font-size:12px;color:#111">x</div>
<div class="a" style="left:64px;top:201px;width:342px;height:25px;background:#fff;border-right:1px solid #c0c0c0;border-bottom:1px solid #c0c0c0"></div>
<div class="t" style="left:64px;top:208px;width:340px;text-align:right;font-size:12px;color:#111;letter-spacing:-0.3px">0.3073</div>
<div class="a" style="left:406px;top:201px;width:341px;height:25px;background:#fff;border-right:1px solid #c0c0c0;border-bottom:1px solid #c0c0c0"></div>
<div class="t" style="left:406px;top:208px;width:339px;text-align:right;font-size:12px;color:#111;letter-spacing:-0.3px">0.3066</div>
<div class="a" style="left:747px;top:201px;width:342px;height:25px;background:#fff;border-right:1px solid #c0c0c0;border-bottom:1px solid #c0c0c0"></div>
<div class="t" style="left:747px;top:208px;width:340px;text-align:right;font-size:12px;color:#111;letter-spacing:-0.3px">0.3051</div>
<div class="a" style="left:1089px;top:201px;width:341px;height:25px;background:#fff;border-right:1px solid #c0c0c0;border-bottom:1px solid #c0c0c0"></div>
<div class="t" style="left:1089px;top:208px;width:339px;text-align:right;font-size:12px;color:#111;letter-spacing:-0.3px">0.3034</div>
<div class="a" style="left:1430px;top:201px;width:341px;height:25px;background:#fff;border-right:1px solid #c0c0c0;border-bottom:1px solid #c0c0c0"></div>
<div class="t" style="left:1430px;top:208px;width:339px;text-align:right;font-size:12px;color:#111;letter-spacing:-0.3px">0.3133</div>
<div class="a" style="left:10px;top:226px;width:54px;height:25px;background:#efefef;border-right:1px solid #6d6d6d;border-bottom:1px solid #6d6d6d;box-shadow:inset 1px 1px 0 #fff,inset -1px -1px 0 #fafafa"></div>
<div class="t b" style="left:10px;top:233px;width:53px;text-align:center;font-size:12px;color:#111">y</div>
<div class="a" style="left:64px;top:226px;width:342px;height:25px;background:#fff;border-right:1px solid #c0c0c0;border-bottom:1px solid #c0c0c0"></div>
<div class="t" style="left:64px;top:233px;width:340px;text-align:right;font-size:12px;color:#111;letter-spacing:-0.3px">0.3270</div>
<div class="a" style="left:406px;top:226px;width:341px;height:25px;background:#fff;border-right:1px solid #c0c0c0;border-bottom:1px solid #c0c0c0"></div>
<div class="t" style="left:406px;top:233px;width:339px;text-align:right;font-size:12px;color:#111;letter-spacing:-0.3px">0.2798</div>
<div class="a" style="left:747px;top:226px;width:342px;height:25px;background:#fff;border-right:1px solid #c0c0c0;border-bottom:1px solid #c0c0c0"></div>
<div class="t" style="left:747px;top:233px;width:340px;text-align:right;font-size:12px;color:#111;letter-spacing:-0.3px">0.2319</div>
<div class="a" style="left:1089px;top:226px;width:341px;height:25px;background:#fff;border-right:1px solid #c0c0c0;border-bottom:1px solid #c0c0c0"></div>
<div class="t" style="left:1089px;top:233px;width:339px;text-align:right;font-size:12px;color:#111;letter-spacing:-0.3px">0.1861</div>
<div class="a" style="left:1430px;top:226px;width:341px;height:25px;background:#fff;border-right:1px solid #c0c0c0;border-bottom:1px solid #c0c0c0"></div>
<div class="t" style="left:1430px;top:233px;width:339px;text-align:right;font-size:12px;color:#111;letter-spacing:-0.3px">0.1484</div>
<div class="a" style="left:10px;top:251px;width:54px;height:25px;background:#efefef;border-right:1px solid #6d6d6d;border-bottom:1px solid #6d6d6d;box-shadow:inset 1px 1px 0 #fff,inset -1px -1px 0 #fafafa"></div>
<div class="t b" style="left:10px;top:258px;width:53px;text-align:center;font-size:12px;color:#111">Y</div>
<div class="a" style="left:64px;top:251px;width:342px;height:25px;background:#fff;border-right:1px solid #c0c0c0;border-bottom:1px solid #c0c0c0"></div>
<div class="t" style="left:64px;top:258px;width:340px;text-align:right;font-size:12px;color:#111;letter-spacing:-0.3px">53.865</div>
<div class="a" style="left:406px;top:251px;width:341px;height:25px;background:#fff;border-right:1px solid #c0c0c0;border-bottom:1px solid #c0c0c0"></div>
<div class="t" style="left:406px;top:258px;width:339px;text-align:right;font-size:12px;color:#111;letter-spacing:-0.3px">52.256</div>
<div class="a" style="left:747px;top:251px;width:342px;height:25px;background:#fff;border-right:1px solid #c0c0c0;border-bottom:1px solid #c0c0c0"></div>
<div class="t" style="left:747px;top:258px;width:340px;text-align:right;font-size:12px;color:#111;letter-spacing:-0.3px">52.898</div>
<div class="a" style="left:1089px;top:251px;width:341px;height:25px;background:#fff;border-right:1px solid #c0c0c0;border-bottom:1px solid #c0c0c0"></div>
<div class="t" style="left:1089px;top:258px;width:339px;text-align:right;font-size:12px;color:#111;letter-spacing:-0.3px">51.594</div>
<div class="a" style="left:1430px;top:251px;width:341px;height:25px;background:#fff;border-right:1px solid #c0c0c0;border-bottom:1px solid #c0c0c0"></div>
<div class="t" style="left:1430px;top:258px;width:339px;text-align:right;font-size:12px;color:#111;letter-spacing:-0.3px">55.703</div>
<div class="a" style="left:10px;top:276px;width:54px;height:25px;background:#efefef;border-right:1px solid #6d6d6d;border-bottom:1px solid #6d6d6d;box-shadow:inset 1px 1px 0 #fff,inset -1px -1px 0 #fafafa"></div>
<div class="t b" style="left:10px;top:283px;width:53px;text-align:center;font-size:12px;color:#111">Delta E</div>
<div class="a" style="left:64px;top:276px;width:342px;height:25px;background:#ffffaa;border-right:1px solid #c0c0c0;border-bottom:1px solid #c0c0c0"></div>
<div class="t" style="left:64px;top:283px;width:340px;text-align:right;font-size:12px;font-weight:bold;color:#111;letter-spacing:-0.3px">2.1</div>
<div class="a" style="left:406px;top:276px;width:341px;height:25px;background:#ffffaa;border-right:1px solid #c0c0c0;border-bottom:1px solid #c0c0c0"></div>
<div class="t" style="left:406px;top:283px;width:339px;text-align:right;font-size:12px;font-weight:bold;color:#111;letter-spacing:-0.3px">2.1</div>
<div class="a" style="left:747px;top:276px;width:342px;height:25px;background:#ffffaa;border-right:1px solid #c0c0c0;border-bottom:1px solid #c0c0c0"></div>
<div class="t" style="left:747px;top:283px;width:340px;text-align:right;font-size:12px;font-weight:bold;color:#111;letter-spacing:-0.3px">2.1</div>
<div class="a" style="left:1089px;top:276px;width:341px;height:25px;background:#ffffaa;border-right:1px solid #c0c0c0;border-bottom:1px solid #c0c0c0"></div>
<div class="t" style="left:1089px;top:283px;width:339px;text-align:right;font-size:12px;font-weight:bold;color:#111;letter-spacing:-0.3px">2.7</div>
<div class="a" style="left:1430px;top:276px;width:341px;height:25px;background:#aaffaa;border-right:1px solid #c0c0c0;border-bottom:1px solid #c0c0c0"></div>
<div class="t" style="left:1430px;top:283px;width:339px;text-align:right;font-size:12px;font-weight:bold;color:#111;letter-spacing:-0.3px">1.6</div>
<div class="a" style="left:10px;top:301px;width:54px;height:25px;background:#efefef;border-right:1px solid #6d6d6d;border-bottom:1px solid #6d6d6d;box-shadow:inset 1px 1px 0 #fff,inset -1px -1px 0 #fafafa"></div>
<div class="t b" style="left:10px;top:308px;width:53px;text-align:center;font-size:12px;color:#111">delta xy</div>
<div class="a" style="left:64px;top:301px;width:342px;height:25px;background:#efefef;border-right:1px solid #c0c0c0;border-bottom:1px solid #c0c0c0"></div>
<div class="t" style="left:64px;top:308px;width:340px;text-align:right;font-size:12px;color:#111;letter-spacing:-0.3px">0.0058</div>
<div class="a" style="left:406px;top:301px;width:341px;height:25px;background:#efefef;border-right:1px solid #c0c0c0;border-bottom:1px solid #c0c0c0"></div>
<div class="t" style="left:406px;top:308px;width:339px;text-align:right;font-size:12px;color:#111;letter-spacing:-0.3px">0.0088</div>
<div class="a" style="left:747px;top:301px;width:342px;height:25px;background:#efefef;border-right:1px solid #c0c0c0;border-bottom:1px solid #c0c0c0"></div>
<div class="t" style="left:747px;top:308px;width:340px;text-align:right;font-size:12px;color:#111;letter-spacing:-0.3px">0.0129</div>
<div class="a" style="left:1089px;top:301px;width:341px;height:25px;background:#efefef;border-right:1px solid #c0c0c0;border-bottom:1px solid #c0c0c0"></div>
<div class="t" style="left:1089px;top:308px;width:339px;text-align:right;font-size:12px;color:#111;letter-spacing:-0.3px">0.0170</div>
<div class="a" style="left:1430px;top:301px;width:341px;height:25px;background:#efefef;border-right:1px solid #c0c0c0;border-bottom:1px solid #c0c0c0"></div>
<div class="t" style="left:1430px;top:308px;width:339px;text-align:right;font-size:12px;color:#111;letter-spacing:-0.3px">0.0095</div>
<div class="a" style="left:10px;top:326px;width:54px;height:25px;background:#efefef;border-right:1px solid #6d6d6d;border-bottom:1px solid #6d6d6d;box-shadow:inset 1px 1px 0 #fff,inset -1px -1px 0 #fafafa"></div>
<div class="t b" style="left:10px;top:333px;width:53px;text-align:center;font-size:12px;color:#111">delta L</div>
<div class="a" style="left:64px;top:326px;width:342px;height:25px;background:#dedede;border-right:1px solid #c0c0c0;border-bottom:1px solid #c0c0c0"></div>
<div class="t" style="left:64px;top:333px;width:340px;text-align:right;font-size:12px;color:#111;letter-spacing:-0.3px">+1.1 %</div>
<div class="a" style="left:406px;top:326px;width:341px;height:25px;background:#dedede;border-right:1px solid #c0c0c0;border-bottom:1px solid #c0c0c0"></div>
<div class="t" style="left:406px;top:333px;width:339px;text-align:right;font-size:12px;color:#111;letter-spacing:-0.3px">-3.5 %</div>
<div class="a" style="left:747px;top:326px;width:342px;height:25px;background:#dedede;border-right:1px solid #c0c0c0;border-bottom:1px solid #c0c0c0"></div>
<div class="t" style="left:747px;top:333px;width:340px;text-align:right;font-size:12px;color:#111;letter-spacing:-0.3px">-2.7 %</div>
<div class="a" style="left:1089px;top:326px;width:341px;height:25px;background:#dedede;border-right:1px solid #c0c0c0;border-bottom:1px solid #c0c0c0"></div>
<div class="t" style="left:1089px;top:333px;width:339px;text-align:right;font-size:12px;color:#111;letter-spacing:-0.3px">-7.3 %</div>
<div class="a" style="left:1430px;top:326px;width:341px;height:25px;background:#dedede;border-right:1px solid #c0c0c0;border-bottom:1px solid #c0c0c0"></div>
<div class="t" style="left:1430px;top:333px;width:339px;text-align:right;font-size:12px;color:#111;letter-spacing:-0.3px">-6.3 %</div>
<div class="a" style="left:10px;top:351px;width:54px;height:4px;background:#efefef;border-right:1px solid #6d6d6d"></div>
<div class="a" style="left:64px;top:351px;width:1707px;height:4px;background:#efefef"></div>
<div class="a" style="left:405px;top:351px;width:1px;height:4px;background:#c0c0c0"></div>
<div class="a" style="left:746px;top:351px;width:1px;height:4px;background:#c0c0c0"></div>
<div class="a" style="left:1088px;top:351px;width:1px;height:4px;background:#c0c0c0"></div>
<div class="a" style="left:1429px;top:351px;width:1px;height:4px;background:#c0c0c0"></div>
<div class="a" style="left:1770px;top:351px;width:1px;height:4px;background:#c0c0c0"></div>
<div class="a" style="left:10px;top:355px;width:1781px;height:18px;background:#f0f0f0;border-top:1px solid #fff"></div>
<svg style="left:14px;top:360px" width="8" height="9"><path d="M7 0V8L0 4Z" fill="#a3a3a3"/></svg>
<svg style="left:1757px;top:360px" width="8" height="9"><path d="M0 0V8L7 4Z" fill="#a3a3a3"/></svg>
<div class="a" style="left:1771px;top:178px;width:18px;height:177px;background:#f0f0f0"></div>
<div class="a" style="left:1779px;top:195px;width:2px;height:142px;background:#858585"></div>
<div class="a" style="left:1789px;top:178px;width:17px;height:197px;background:#ebebeb"></div>
<div class="a" style="left:1809px;top:162px;width:88px;height:218px;background:#f0f0f0"></div>
<div class="a" style="left:1808px;top:159px;width:89px;height:104px;border-left:3px solid #9a9a9a;background:#fff"></div>
<div class="a" style="left:1815px;top:162px;width:80px;height:98px;border:1px solid #707070;border-right:2px solid #707070;border-bottom:2px solid #707070;background:#9a9a9a"></div>
<div class="a" style="left:1816px;top:180px;width:77px;height:78px;background:#ebebeb"></div>
<div class="a" style="left:1816px;top:163px;width:77px;height:18px;background:#e4ebf6;border-bottom:1px solid #a6a6a6;border-radius:5px 5px 0 0"></div>
<div class="pht" style="left:1822px;top:167px">Display</div>
<div class="a" style="left:1821px;top:181px;width:66px;height:15px;background:#efefef"></div>
<div class="a" style="left:1823px;top:183px;width:11px;height:11px;border-radius:50%;background:#efefef;border:1px solid #b8b8b8;border-right-color:#ddd;border-bottom-color:#ddd"></div>
<div class="t" style="left:1841px;top:183px;font-size:12px;color:#a0a0a0;letter-spacing:0.2px">Sensor</div>
<div class="a" style="left:1821px;top:196px;width:66px;height:15px;background:#efefef"></div>
<div class="a" style="left:1823px;top:198px;width:11px;height:11px;border-radius:50%;background:#fff;border:1px solid #555;border-right-color:#ddd;border-bottom-color:#ddd"></div>
<div class="t" style="left:1841px;top:198px;font-size:12px;color:#000;letter-spacing:0.2px">RGB</div>
<div class="a" style="left:1821px;top:212px;width:66px;height:15px;background:#efefef"></div>
<div class="a" style="left:1823px;top:214px;width:11px;height:11px;border-radius:50%;background:#fff;border:1px solid #555;border-right-color:#ddd;border-bottom-color:#ddd"></div>
<div class="t" style="left:1841px;top:214px;font-size:12px;color:#000;letter-spacing:0.2px">XYZ</div>
<div class="a" style="left:1821px;top:228px;width:66px;height:15px;background:#efefef"></div>
<div class="a" style="left:1823px;top:230px;width:11px;height:11px;border-radius:50%;background:#fff;border:1px solid #555;border-right-color:#ddd;border-bottom-color:#ddd"></div>
<div class="t" style="left:1841px;top:230px;font-size:12px;color:#000;letter-spacing:0.2px">xyz</div>
<div class="a" style="left:1821px;top:244px;width:66px;height:15px;background:#efefef"></div>
<div class="a" style="left:1823px;top:246px;width:11px;height:11px;border-radius:50%;background:#fff;border:1px solid #555;border-right-color:#ddd;border-bottom-color:#ddd"></div>
<div class="a" style="left:1827px;top:250px;width:4px;height:4px;border-radius:50%;background:#000"></div>
<div class="t" style="left:1841px;top:246px;font-size:12px;color:#000;letter-spacing:0.2px">xyY</div>
<div class="a" style="left:1812px;top:263px;width:89px;height:117px;background:#888"></div>
<div class="a" style="left:1813px;top:265px;width:82px;height:29px;background:#ececec;border-top:1px solid #fff;border-left:1px solid #fff;border-bottom:1px solid #c8c8c8"></div>
<div class="t" style="left:1863px;top:273px;font-size:13.5px;letter-spacing:0.3px">Go</div>
<div class="a" style="left:1813px;top:295px;width:82px;height:29px;background:#ececec;border-top:1px solid #fff;border-left:1px solid #fff;border-bottom:1px solid #c8c8c8"></div>
<div class="t" style="left:1851px;top:303px;font-size:13.5px;letter-spacing:0.3px">Delete</div>
<div class="a" style="left:1813px;top:325px;width:82px;height:29px;background:#ececec;border-top:1px solid #fff;border-left:1px solid #fff;border-bottom:1px solid #c8c8c8"></div>
<div class="t" style="left:1858px;top:333px;font-size:13.5px;letter-spacing:0.3px">Refs</div>
<svg style="left:1814px;top:264px" width="40" height="32"><path d="M5 3 H12 L15 9 L16 28 L13 27 L10 23 H5 Z" fill="#c4c4c4" stroke="#111" stroke-width="0.9"/><path d="M5 8H10Q13 10 10 13H8V17H10Q13 19 10 22H5" fill="none" stroke="#111" stroke-width="0.9"/><path d="M25 4 L31 9 H35 V29 H30 L26 20 Z" fill="#c4c4c4" stroke="#111" stroke-width="0.9"/><path d="M35 9H31Q28 11 31 14H33V18H31Q28 20 31 23H35" fill="none" stroke="#111" stroke-width="0.9"/><rect x="4" y="3" width="2" height="22" fill="#111"/><rect x="34" y="7" width="2" height="22" fill="#111"/><path d="M9 3 H25 L27 12 L35 17 L29 29 H17 L16 17 L13 8 Z" fill="#9010c8" stroke="#50007a" stroke-width="0.9"/><path d="M17 9 L24 5 L26 14 L19 18Z" fill="#a828e0"/><path d="M18 21 L26 17 L31 21 L25 28Z" fill="#c850f0"/></svg>
<svg style="left:1819px;top:296px" width="29" height="28"><defs><linearGradient id="bin" x1="0" y1="0" x2="1" y2="1"><stop offset="0" stop-color="#e8f4ff"/><stop offset="1" stop-color="#6aaae8"/></linearGradient></defs><path d="M1 4 Q14 0 27 1 L24 25 Q13 28 5 25Z" fill="url(#bin)" stroke="#8ab8e0" stroke-width="0.8"/><path d="M18 9 A5 5 0 0 0 10 13" stroke="#1a9a1a" stroke-width="2.5" fill="none"/><path d="M11 19 A5 5 0 0 0 19 15" stroke="#1a9a1a" stroke-width="2.5" fill="none"/></svg>
<svg style="left:1818px;top:329px" width="33" height="23"><path d="M0 12 L3 9 L5 2 L8 8 L10 9 L13 8 L15 3 L18 0 L20 1 L22 2 L25 8 L28 7 L32 10 V23 H0Z" fill="#f0f000"/><rect x="1" y="12" width="3" height="11" fill="#ff00ff"/><rect x="4" y="4" width="3" height="19" fill="#0000ff"/><rect x="8" y="9" width="3" height="14" fill="#00ffff"/><rect x="11" y="9" width="3" height="14" fill="#00e000"/><rect x="14" y="3" width="6" height="20" fill="#ffff00"/><rect x="21" y="4" width="4" height="19" fill="#800000"/><rect x="25" y="9" width="7" height="14" fill="#ff0000"/></svg>
<div class="a" style="left:1818px;top:358px;width:56px;height:18px;background:#f0f0f0"></div>
<div class="a" style="left:1819px;top:361px;width:12px;height:12px;background:#fff;border-top:1px solid #555;border-left:1px solid #555;border-right:1px solid #ddd;border-bottom:1px solid #ddd"></div>
<div class="t" style="left:1837px;top:360px;font-size:13.5px;letter-spacing:0.3px">Edit</div>
<div class="a" style="left:1897px;top:159px;width:4px;height:225px;background:#888"></div>
<div class="a" style="left:1901px;top:93px;width:19px;height:948px;background:#f0f0f0"></div>
<div class="a" style="left:1909px;top:160px;width:2px;height:818px;background:#8a8a8a"></div>
<div class="a" style="left:2px;top:380px;width:1899px;height:4px;background:#8a8a8a"></div>
<div class="a" style="left:2px;top:384px;width:1895px;height:3px;background:#fff"></div>
<div class="a" style="left:2px;top:387px;width:1899px;height:654px;background:#f0f0f0"></div>
<div class="a" style="left:384px;top:387px;width:3px;height:631px;background:#8a8a8a"></div>
<div class="a" style="left:387px;top:387px;width:3px;height:631px;background:#fff"></div>
<div class="a" style="left:2px;top:384px;width:3px;height:634px;background:#fff"></div>
<div class="a" style="left:2px;top:1016px;width:1895px;height:2px;background:#fff"></div>
<div class="a" style="left:2px;top:1018px;width:1899px;height:2px;background:#7a7a7a"></div>
<div class="a" style="left:2px;top:1020px;width:1899px;height:2px;background:#aaa"></div>
<div class="a" style="left:1897px;top:384px;width:4px;height:636px;background:#8a8a8a"></div>
<div class="a" style="left:5px;top:387px;width:379px;height:629px;border:1px solid #707070;border-right:2px solid #707070;border-bottom:2px solid #707070;background:#9a9a9a"></div>
<div class="a" style="left:6px;top:406px;width:376px;height:608px;background:#ebebeb"></div>
<div class="a" style="left:6px;top:388px;width:376px;height:18px;background:#e4ebf6;border-bottom:1px solid #a6a6a6;border-radius:4px 4px 0 0"></div>
<div class="pht" style="left:12px;top:391px">Selected color</div>
<div class="a" style="left:18px;top:409px;width:110px;height:14px;background:#efefef"></div>
<div class="t" style="left:18px;top:410px;font-size:13px;letter-spacing:0.3px">RGB Levels</div>
<div class="a" style="left:230px;top:407px;width:128px;height:14px;background:#efefef"></div>
<div class="t" style="left:241px;top:408px;font-size:13px;letter-spacing:0.65px">Current Measure</div>
<div class="a" style="left:14px;top:433px;width:200px;height:86px;background:#efefef"></div>
<div class="a" style="left:14px;top:477px;width:200px;height:1px;background:repeating-linear-gradient(90deg,#8a8a8a 0 3px,transparent 3px 6px)"></div>
<svg style="left:14px;top:505px" width="200" height="15"><path d="M0 10 Q24.5 -4 49 10 L49 14 L0 14Z" fill="#a00000" stroke="#000" stroke-width="0.6"/><path d="M51 10 Q75.5 -4 100 10 L100 14 L51 14Z" fill="#00a000" stroke="#000" stroke-width="0.6"/><path d="M102 10 Q126.5 -4 151 10 L151 14 L102 14Z" fill="#0000b0" stroke="#000" stroke-width="0.6"/><path d="M153 10 Q176.5 -4 200 10 L200 14 L153 14Z" fill="#c08a10" stroke="#000" stroke-width="0.6"/><rect x="0" y="9" width="200" height="5" fill="#000"/></svg>
<div class="t ser b" style="left:26px;top:497px;font-size:11.5px;color:#111">0.0%</div>
<div class="t ser b" style="left:77px;top:497px;font-size:11.5px;color:#111">0.0%</div>
<div class="t ser b" style="left:128px;top:497px;font-size:11.5px;color:#111">0.0%</div>
<div class="t ser b" style="left:175px;top:497px;font-size:11.5px;color:#111">dE 0.0</div>
<div class="a" style="left:16px;top:533px;width:192px;height:74px;background:#efefef"></div>
<div class="t b" style="left:35px;top:535px;font-size:13px;letter-spacing:0.75px;color:#111">Measure</div>
<div class="t b" style="left:127px;top:535px;font-size:13px;letter-spacing:0.3px;color:#111">Reference</div>
<div class="a" style="left:18px;top:622px;width:42px;height:14px;background:#efefef"></div>
<div class="t" style="left:18px;top:623px;font-size:13px;letter-spacing:0.9px">Target</div>
<div class="a" style="left:50px;top:638px;width:116px;height:89px;border:1px solid #000;background:conic-gradient(from 0deg at 50% 50%,#30ff00 0deg,#f0d000 45deg,#ff4000 75deg,#ff0000 95deg,#ff0060 125deg,#ff0090 140deg,#9000b0 180deg,#2000f0 215deg,#0000ff 235deg,#0070b8 265deg,#00a0a0 290deg,#00ff80 320deg,#30ff00 360deg)"></div>
<div class="a" style="left:67px;top:651px;width:82px;height:63px;border:1px solid #fff;border-radius:9px;background:#000"></div>
<svg style="left:67px;top:651px" width="82" height="63"><g stroke="#fff" stroke-width="1" fill="none" stroke-dasharray="3 3"><path d="M41.5 1V62"/><path d="M-2 31.5H84"/><ellipse cx="41.5" cy="31.5" rx="21" ry="15"/></g></svg>
<div class="a" style="left:220px;top:430px;width:153px;height:578px;border-top:2px solid #7b7b7b;border-left:2px solid #7b7b7b;border-right:1px solid #fff;border-bottom:1px solid #fff;background:#f0f0f0"></div>
<div class="a" style="left:222px;top:432px;width:53px;height:23px;background:#efefef;border-right:1px solid #6d6d6d;border-bottom:1px solid #6d6d6d;box-shadow:inset 1px 1px 0 #fff,inset -1px -1px 0 #fafafa"></div>
<div class="t b" style="left:222px;top:438px;width:52px;text-align:center;font-size:12px;color:#111">Y cd/m²</div>
<div class="a" style="left:275px;top:432px;width:80px;height:23px;background:#fff;border-right:1px solid #c0c0c0;border-bottom:1px solid #c0c0c0"></div>
<div class="a" style="left:222px;top:455px;width:53px;height:23px;background:#efefef;border-right:1px solid #6d6d6d;border-bottom:1px solid #6d6d6d;box-shadow:inset 1px 1px 0 #fff,inset -1px -1px 0 #fafafa"></div>
<div class="t b" style="left:222px;top:461px;width:52px;text-align:center;font-size:12px;color:#111">Y ftL</div>
<div class="a" style="left:275px;top:455px;width:80px;height:23px;background:#fff;border-right:1px solid #c0c0c0;border-bottom:1px solid #c0c0c0"></div>
<div class="a" style="left:222px;top:478px;width:53px;height:23px;background:#efefef;border-right:1px solid #6d6d6d;border-bottom:1px solid #6d6d6d;box-shadow:inset 1px 1px 0 #fff,inset -1px -1px 0 #fafafa"></div>
<div class="t b" style="left:222px;top:484px;width:52px;text-align:center;font-size:12px;color:#111">T°</div>
<div class="a" style="left:275px;top:478px;width:80px;height:23px;background:#fff;border-right:1px solid #c0c0c0;border-bottom:1px solid #c0c0c0"></div>
<div class="a" style="left:222px;top:501px;width:53px;height:23px;background:#efefef;border-right:1px solid #6d6d6d;border-bottom:1px solid #6d6d6d;box-shadow:inset 1px 1px 0 #fff,inset -1px -1px 0 #fafafa"></div>
<div class="t b" style="left:222px;top:507px;width:52px;text-align:center;font-size:12px;color:#111">X</div>
<div class="a" style="left:275px;top:501px;width:80px;height:23px;background:#dedede;border-right:1px solid #c0c0c0;border-bottom:1px solid #c0c0c0"></div>
<div class="a" style="left:222px;top:524px;width:53px;height:23px;background:#efefef;border-right:1px solid #6d6d6d;border-bottom:1px solid #6d6d6d;box-shadow:inset 1px 1px 0 #fff,inset -1px -1px 0 #fafafa"></div>
<div class="t b" style="left:222px;top:530px;width:52px;text-align:center;font-size:12px;color:#111">Y</div>
<div class="a" style="left:275px;top:524px;width:80px;height:23px;background:#dedede;border-right:1px solid #c0c0c0;border-bottom:1px solid #c0c0c0"></div>
<div class="a" style="left:222px;top:547px;width:53px;height:23px;background:#efefef;border-right:1px solid #6d6d6d;border-bottom:1px solid #6d6d6d;box-shadow:inset 1px 1px 0 #fff,inset -1px -1px 0 #fafafa"></div>
<div class="t b" style="left:222px;top:553px;width:52px;text-align:center;font-size:12px;color:#111">Z</div>
<div class="a" style="left:275px;top:547px;width:80px;height:23px;background:#dedede;border-right:1px solid #c0c0c0;border-bottom:1px solid #c0c0c0"></div>
<div class="a" style="left:222px;top:570px;width:53px;height:23px;background:#efefef;border-right:1px solid #6d6d6d;border-bottom:1px solid #6d6d6d;box-shadow:inset 1px 1px 0 #fff,inset -1px -1px 0 #fafafa"></div>
<div class="t b" style="left:222px;top:576px;width:52px;text-align:center;font-size:12px;color:#111">R</div>
<div class="a" style="left:275px;top:570px;width:80px;height:23px;background:#fff;border-right:1px solid #c0c0c0;border-bottom:1px solid #c0c0c0"></div>
<div class="a" style="left:222px;top:593px;width:53px;height:23px;background:#efefef;border-right:1px solid #6d6d6d;border-bottom:1px solid #6d6d6d;box-shadow:inset 1px 1px 0 #fff,inset -1px -1px 0 #fafafa"></div>
<div class="t b" style="left:222px;top:599px;width:52px;text-align:center;font-size:12px;color:#111">G</div>
<div class="a" style="left:275px;top:593px;width:80px;height:23px;background:#fff;border-right:1px solid #c0c0c0;border-bottom:1px solid #c0c0c0"></div>
<div class="a" style="left:222px;top:616px;width:53px;height:23px;background:#efefef;border-right:1px solid #6d6d6d;border-bottom:1px solid #6d6d6d;box-shadow:inset 1px 1px 0 #fff,inset -1px -1px 0 #fafafa"></div>
<div class="t b" style="left:222px;top:622px;width:52px;text-align:center;font-size:12px;color:#111">B</div>
<div class="a" style="left:275px;top:616px;width:80px;height:23px;background:#fff;border-right:1px solid #c0c0c0;border-bottom:1px solid #c0c0c0"></div>
<div class="a" style="left:222px;top:639px;width:53px;height:23px;background:#efefef;border-right:1px solid #6d6d6d;border-bottom:1px solid #6d6d6d;box-shadow:inset 1px 1px 0 #fff,inset -1px -1px 0 #fafafa"></div>
<div class="t b" style="left:222px;top:645px;width:52px;text-align:center;font-size:12px;color:#111">x</div>
<div class="a" style="left:275px;top:639px;width:80px;height:23px;background:#dedede;border-right:1px solid #c0c0c0;border-bottom:1px solid #c0c0c0"></div>
<div class="a" style="left:222px;top:662px;width:53px;height:23px;background:#efefef;border-right:1px solid #6d6d6d;border-bottom:1px solid #6d6d6d;box-shadow:inset 1px 1px 0 #fff,inset -1px -1px 0 #fafafa"></div>
<div class="t b" style="left:222px;top:668px;width:52px;text-align:center;font-size:12px;color:#111">y</div>
<div class="a" style="left:275px;top:662px;width:80px;height:23px;background:#dedede;border-right:1px solid #c0c0c0;border-bottom:1px solid #c0c0c0"></div>
<div class="a" style="left:222px;top:685px;width:53px;height:23px;background:#efefef;border-right:1px solid #6d6d6d;border-bottom:1px solid #6d6d6d;box-shadow:inset 1px 1px 0 #fff,inset -1px -1px 0 #fafafa"></div>
<div class="t b" style="left:222px;top:691px;width:52px;text-align:center;font-size:12px;color:#111">Y</div>
<div class="a" style="left:275px;top:685px;width:80px;height:23px;background:#dedede;border-right:1px solid #c0c0c0;border-bottom:1px solid #c0c0c0"></div>
<div class="a" style="left:222px;top:708px;width:53px;height:23px;background:#efefef;border-right:1px solid #6d6d6d;border-bottom:1px solid #6d6d6d;box-shadow:inset 1px 1px 0 #fff,inset -1px -1px 0 #fafafa"></div>
<div class="t b" style="left:222px;top:714px;width:52px;text-align:center;font-size:12px;color:#111">x</div>
<div class="a" style="left:275px;top:708px;width:80px;height:23px;background:#fff;border-right:1px solid #c0c0c0;border-bottom:1px solid #c0c0c0"></div>
<div class="a" style="left:222px;top:731px;width:53px;height:23px;background:#efefef;border-right:1px solid #6d6d6d;border-bottom:1px solid #6d6d6d;box-shadow:inset 1px 1px 0 #fff,inset -1px -1px 0 #fafafa"></div>
<div class="t b" style="left:222px;top:737px;width:52px;text-align:center;font-size:12px;color:#111">y</div>
<div class="a" style="left:275px;top:731px;width:80px;height:23px;background:#fff;border-right:1px solid #c0c0c0;border-bottom:1px solid #c0c0c0"></div>
<div class="a" style="left:222px;top:754px;width:53px;height:23px;background:#efefef;border-right:1px solid #6d6d6d;border-bottom:1px solid #6d6d6d;box-shadow:inset 1px 1px 0 #fff,inset -1px -1px 0 #fafafa"></div>
<div class="t b" style="left:222px;top:760px;width:52px;text-align:center;font-size:12px;color:#111">z</div>
<div class="a" style="left:275px;top:754px;width:80px;height:23px;background:#fff;border-right:1px solid #c0c0c0;border-bottom:1px solid #c0c0c0"></div>
<div class="a" style="left:222px;top:777px;width:53px;height:23px;background:#efefef;border-right:1px solid #6d6d6d;border-bottom:1px solid #6d6d6d;box-shadow:inset 1px 1px 0 #fff,inset -1px -1px 0 #fafafa"></div>
<div class="t b" style="left:222px;top:783px;width:52px;text-align:center;font-size:12px;color:#111">L</div>
<div class="a" style="left:275px;top:777px;width:80px;height:23px;background:#dedede;border-right:1px solid #c0c0c0;border-bottom:1px solid #c0c0c0"></div>
<div class="a" style="left:222px;top:800px;width:53px;height:23px;background:#efefef;border-right:1px solid #6d6d6d;border-bottom:1px solid #6d6d6d;box-shadow:inset 1px 1px 0 #fff,inset -1px -1px 0 #fafafa"></div>
<div class="t b" style="left:222px;top:806px;width:52px;text-align:center;font-size:12px;color:#111">a</div>
<div class="a" style="left:275px;top:800px;width:80px;height:23px;background:#dedede;border-right:1px solid #c0c0c0;border-bottom:1px solid #c0c0c0"></div>
<div class="a" style="left:222px;top:823px;width:53px;height:23px;background:#efefef;border-right:1px solid #6d6d6d;border-bottom:1px solid #6d6d6d;box-shadow:inset 1px 1px 0 #fff,inset -1px -1px 0 #fafafa"></div>
<div class="t b" style="left:222px;top:829px;width:52px;text-align:center;font-size:12px;color:#111">b</div>
<div class="a" style="left:275px;top:823px;width:80px;height:23px;background:#dedede;border-right:1px solid #c0c0c0;border-bottom:1px solid #c0c0c0"></div>
<div class="a" style="left:222px;top:846px;width:53px;height:23px;background:#efefef;border-right:1px solid #6d6d6d;border-bottom:1px solid #6d6d6d;box-shadow:inset 1px 1px 0 #fff,inset -1px -1px 0 #fafafa"></div>
<div class="t b" style="left:222px;top:852px;width:52px;text-align:center;font-size:12px;color:#111">L</div>
<div class="a" style="left:275px;top:846px;width:80px;height:23px;background:#fff;border-right:1px solid #c0c0c0;border-bottom:1px solid #c0c0c0"></div>
<div class="a" style="left:222px;top:869px;width:53px;height:23px;background:#efefef;border-right:1px solid #6d6d6d;border-bottom:1px solid #6d6d6d;box-shadow:inset 1px 1px 0 #fff,inset -1px -1px 0 #fafafa"></div>
<div class="t b" style="left:222px;top:875px;width:52px;text-align:center;font-size:12px;color:#111">C</div>
<div class="a" style="left:275px;top:869px;width:80px;height:23px;background:#fff;border-right:1px solid #c0c0c0;border-bottom:1px solid #c0c0c0"></div>
<div class="a" style="left:222px;top:892px;width:53px;height:23px;background:#efefef;border-right:1px solid #6d6d6d;border-bottom:1px solid #6d6d6d;box-shadow:inset 1px 1px 0 #fff,inset -1px -1px 0 #fafafa"></div>
<div class="t b" style="left:222px;top:898px;width:52px;text-align:center;font-size:12px;color:#111">H</div>
<div class="a" style="left:275px;top:892px;width:80px;height:23px;background:#fff;border-right:1px solid #c0c0c0;border-bottom:1px solid #c0c0c0"></div>
<div class="a" style="left:222px;top:915px;width:53px;height:23px;background:#efefef;border-right:1px solid #6d6d6d;border-bottom:1px solid #6d6d6d;box-shadow:inset 1px 1px 0 #fff,inset -1px -1px 0 #fafafa"></div>
<div class="t b" style="left:222px;top:921px;width:52px;text-align:center;font-size:12px;color:#111">L</div>
<div class="a" style="left:275px;top:915px;width:80px;height:23px;background:#dedede;border-right:1px solid #c0c0c0;border-bottom:1px solid #c0c0c0"></div>
<div class="a" style="left:222px;top:938px;width:53px;height:23px;background:#efefef;border-right:1px solid #6d6d6d;border-bottom:1px solid #6d6d6d;box-shadow:inset 1px 1px 0 #fff,inset -1px -1px 0 #fafafa"></div>
<div class="t b" style="left:222px;top:944px;width:52px;text-align:center;font-size:12px;color:#111">M</div>
<div class="a" style="left:275px;top:938px;width:80px;height:23px;background:#dedede;border-right:1px solid #c0c0c0;border-bottom:1px solid #c0c0c0"></div>
<div class="a" style="left:222px;top:961px;width:53px;height:23px;background:#efefef;border-right:1px solid #6d6d6d;border-bottom:1px solid #6d6d6d;box-shadow:inset 1px 1px 0 #fff,inset -1px -1px 0 #fafafa"></div>
<div class="t b" style="left:222px;top:967px;width:52px;text-align:center;font-size:12px;color:#111">S</div>
<div class="a" style="left:275px;top:961px;width:80px;height:23px;background:#dedede;border-right:1px solid #c0c0c0;border-bottom:1px solid #c0c0c0"></div>
<div class="a" style="left:222px;top:984px;width:133px;height:22px;background:#a0a0a0"></div>
<svg style="left:360px;top:438px" width="9" height="6"><path d="M0 6H8L4 0Z" fill="#a3a3a3"/></svg>
<svg style="left:360px;top:996px" width="9" height="6"><path d="M0 0H8L4 6Z" fill="#a3a3a3"/></svg>
<div class="a" style="left:391px;top:387px;width:1506px;height:629px;border:1px solid #707070;border-right:2px solid #707070;border-bottom:2px solid #707070;background:#9a9a9a"></div>
<div class="a" style="left:392px;top:406px;width:1503px;height:608px;background:#ebebeb"></div>
<div class="a" style="left:392px;top:388px;width:1501px;height:18px;background:#e4ebf6;border-bottom:1px solid #a6a6a6;border-radius:4px 4px 0 0"></div>
<div class="pht" style="left:398px;top:391px">Information</div>
<div class="a" style="left:396px;top:410px;width:302px;height:22px;border-top:2px solid #7a7a7a;border-left:2px solid #7a7a7a;border-bottom:1px solid #fff;border-right:1px solid #fff;background:#fff"></div>
<div class="a" style="left:400px;top:413px;width:279px;height:16px;background:#0078d7"></div>
<div class="t" style="left:401px;top:414px;font-size:13.5px;color:#fff;letter-spacing:0.2px">Saturation Luminance - Shift</div>
<div class="a" style="left:679px;top:412px;width:17px;height:18px;background:#f0f0f0;border-right:1px solid #555;border-bottom:1px solid #555;border-top:1px solid #fff;border-left:1px solid #fff"></div>
<svg style="left:684px;top:419px" width="8" height="4"><path d="M0 0H7L3.5 4Z" fill="#000"/></svg>
<div class="a" style="left:399px;top:439px;width:746px;height:569px;border-top:2px solid #a0a0a0;border-left:2px solid #a0a0a0;border-right:1px solid #fff;border-bottom:1px solid #fff"></div><div class="a" style="left:401px;top:441px;width:743px;height:566px;border-top:2px solid #696969;border-left:1px solid #696969;border-right:2px solid #f0f0f0;border-bottom:2px solid #f0f0f0"></div><div class="a" style="left:402px;top:443px;width:740px;height:562px;background:linear-gradient(90deg,#202020,#fafafa)"></div>
<div class="a" style="left:1147px;top:439px;width:746px;height:569px;border-top:2px solid #a0a0a0;border-left:2px solid #a0a0a0;border-right:1px solid #fff;border-bottom:1px solid #fff"></div><div class="a" style="left:1149px;top:441px;width:743px;height:566px;border-top:2px solid #696969;border-left:1px solid #696969;border-right:2px solid #f0f0f0;border-bottom:2px solid #f0f0f0"></div><div class="a" style="left:1150px;top:443px;width:740px;height:562px;background:linear-gradient(90deg,#202020,#fafafa)"></div>
<div class="t b" style="left:682px;top:445px;font-size:14.5px;color:#d8d800;letter-spacing:0.1px">Saturation Sweep Luminance</div>
<div class="t b" style="left:1444px;top:445px;font-size:14.5px;color:#d8d800;letter-spacing:0.1px">Saturation Scan Shifts</div>
<svg style="left:402px;top:443px" width="740" height="562" viewBox="0 0 740 562" shape-rendering="crispEdges"><rect x="0" y="0" width="1" height="562" fill="#004545"/><rect x="74" y="0" width="1" height="562" fill="#004545"/><rect x="148" y="0" width="1" height="562" fill="#004545"/><rect x="222" y="0" width="1" height="562" fill="#004545"/><rect x="296" y="0" width="1" height="562" fill="#004545"/><rect x="370" y="0" width="1" height="562" fill="#004545"/><rect x="444" y="0" width="1" height="562" fill="#004545"/><rect x="518" y="0" width="1" height="562" fill="#004545"/><rect x="592" y="0" width="1" height="562" fill="#004545"/><rect x="666" y="0" width="1" height="562" fill="#004545"/><rect x="0" y="56" width="740" height="1" fill="#004545"/><rect x="0" y="112" width="740" height="1" fill="#004545"/><rect x="0" y="168" width="740" height="1" fill="#004545"/><rect x="0" y="224" width="740" height="1" fill="#004545"/><rect x="0" y="280" width="740" height="1" fill="#004545"/><rect x="0" y="337" width="740" height="1" fill="#004545"/><rect x="0" y="393" width="740" height="1" fill="#004545"/><rect x="0" y="449" width="740" height="1" fill="#004545"/><rect x="0" y="505" width="740" height="1" fill="#004545"/></svg>
<svg style="left:1150px;top:443px" width="740" height="562" viewBox="0 0 740 562" shape-rendering="crispEdges"><rect x="0" y="0" width="1" height="562" fill="#004545"/><rect x="74" y="0" width="1" height="562" fill="#004545"/><rect x="148" y="0" width="1" height="562" fill="#004545"/><rect x="222" y="0" width="1" height="562" fill="#004545"/><rect x="296" y="0" width="1" height="562" fill="#004545"/><rect x="370" y="0" width="1" height="562" fill="#004545"/><rect x="444" y="0" width="1" height="562" fill="#004545"/><rect x="518" y="0" width="1" height="562" fill="#004545"/><rect x="592" y="0" width="1" height="562" fill="#004545"/><rect x="666" y="0" width="1" height="562" fill="#004545"/><rect x="0" y="35" width="740" height="1" fill="#004545"/><rect x="0" y="70" width="740" height="1" fill="#004545"/><rect x="0" y="105" width="740" height="1" fill="#004545"/><rect x="0" y="140" width="740" height="1" fill="#004545"/><rect x="0" y="175" width="740" height="1" fill="#004545"/><rect x="0" y="210" width="740" height="1" fill="#004545"/><rect x="0" y="245" width="740" height="1" fill="#004545"/><rect x="0" y="309" width="740" height="1" fill="#004545"/><rect x="0" y="337" width="740" height="1" fill="#004545"/><rect x="0" y="365" width="740" height="1" fill="#004545"/><rect x="0" y="393" width="740" height="1" fill="#004545"/><rect x="0" y="421" width="740" height="1" fill="#004545"/><rect x="0" y="449" width="740" height="1" fill="#004545"/><rect x="0" y="477" width="740" height="1" fill="#004545"/><rect x="0" y="505" width="740" height="1" fill="#004545"/><rect x="0" y="533" width="740" height="1" fill="#004545"/></svg>
<div class="t ser" style="left:404px;top:484px;font-size:13.5px;color:#e0e0e0">90%</div>
<div class="t ser" style="left:404px;top:540px;font-size:13.5px;color:#e0e0e0">80%</div>
<div class="t ser" style="left:404px;top:596px;font-size:13.5px;color:#e0e0e0">70%</div>
<div class="t ser" style="left:404px;top:652px;font-size:13.5px;color:#e0e0e0">60%</div>
<div class="t ser" style="left:404px;top:708px;font-size:13.5px;color:#e0e0e0">50%</div>
<div class="t ser" style="left:404px;top:765px;font-size:13.5px;color:#e0e0e0">40%</div>
<div class="t ser" style="left:404px;top:821px;font-size:13.5px;color:#e0e0e0">30%</div>
<div class="t ser" style="left:404px;top:877px;font-size:13.5px;color:#e0e0e0">20%</div>
<div class="t ser" style="left:404px;top:933px;font-size:13.5px;color:#e0e0e0">10%</div>
<div class="t ser" style="left:479px;top:990px;font-size:13.5px;color:#ebebeb">10% Sat</div>
<div class="t ser" style="left:1227px;top:709px;font-size:13.5px;color:#ebebeb">10% Sat</div>
<div class="t ser" style="left:1227px;top:990px;font-size:13.5px;color:#ebebeb">10% Sat</div>
<div class="t ser" style="left:553px;top:990px;font-size:13.5px;color:#eaeaea">20% Sat</div>
<div class="t ser" style="left:1301px;top:709px;font-size:13.5px;color:#eaeaea">20% Sat</div>
<div class="t ser" style="left:1301px;top:990px;font-size:13.5px;color:#eaeaea">20% Sat</div>
<div class="t ser" style="left:627px;top:990px;font-size:13.5px;color:#c8c8c8">30% Sat</div>
<div class="t ser" style="left:1375px;top:709px;font-size:13.5px;color:#c8c8c8">30% Sat</div>
<div class="t ser" style="left:1375px;top:990px;font-size:13.5px;color:#c8c8c8">30% Sat</div>
<div class="t ser" style="left:701px;top:990px;font-size:13.5px;color:#a6a6a6">40% Sat</div>
<div class="t ser" style="left:1449px;top:709px;font-size:13.5px;color:#a6a6a6">40% Sat</div>
<div class="t ser" style="left:1449px;top:990px;font-size:13.5px;color:#a6a6a6">40% Sat</div>
<div class="t ser" style="left:775px;top:990px;font-size:13.5px;color:#858585">50% Sat</div>
<div class="t ser" style="left:1523px;top:709px;font-size:13.5px;color:#858585">50% Sat</div>
<div class="t ser" style="left:1523px;top:990px;font-size:13.5px;color:#858585">50% Sat</div>
<div class="t ser" style="left:849px;top:990px;font-size:13.5px;color:#636363">60% Sat</div>
<div class="t ser" style="left:1597px;top:709px;font-size:13.5px;color:#636363">60% Sat</div>
<div class="t ser" style="left:1597px;top:990px;font-size:13.5px;color:#636363">60% Sat</div>
<div class="t ser" style="left:923px;top:990px;font-size:13.5px;color:#424242">70% Sat</div>
<div class="t ser" style="left:1671px;top:709px;font-size:13.5px;color:#424242">70% Sat</div>
<div class="t ser" style="left:1671px;top:990px;font-size:13.5px;color:#424242">70% Sat</div>
<div class="t ser" style="left:997px;top:990px;font-size:13.5px;color:#202020">80% Sat</div>
<div class="t ser" style="left:1745px;top:709px;font-size:13.5px;color:#202020">80% Sat</div>
<div class="t ser" style="left:1745px;top:990px;font-size:13.5px;color:#202020">80% Sat</div>
<div class="t ser" style="left:1071px;top:990px;font-size:13.5px;color:#000000">90% Sat</div>
<div class="t ser" style="left:1819px;top:709px;font-size:13.5px;color:#000000">90% Sat</div>
<div class="t ser" style="left:1819px;top:990px;font-size:13.5px;color:#000000">90% Sat</div>
<div class="t ser" style="left:1152px;top:462px;font-size:13.5px;color:#e0e0e0">15%</div>
<div class="t ser" style="left:1152px;top:497px;font-size:13.5px;color:#e0e0e0">10%</div>
<div class="t ser" style="left:1152px;top:532px;font-size:13.5px;color:#e0e0e0">5%</div>
<div class="t ser" style="left:1152px;top:567px;font-size:13.5px;color:#e0e0e0">0%</div>
<div class="t ser" style="left:1152px;top:602px;font-size:13.5px;color:#e0e0e0">-5%</div>
<div class="t ser" style="left:1152px;top:637px;font-size:13.5px;color:#e0e0e0">-10%</div>
<div class="t ser" style="left:1152px;top:672px;font-size:13.5px;color:#e0e0e0">-15%</div>
<div class="t ser" style="left:1152px;top:736px;font-size:13.5px;color:#e0e0e0">18</div>
<div class="t ser" style="left:1152px;top:764px;font-size:13.5px;color:#e0e0e0">16</div>
<div class="t ser" style="left:1152px;top:792px;font-size:13.5px;color:#e0e0e0">14</div>
<div class="t ser" style="left:1152px;top:820px;font-size:13.5px;color:#e0e0e0">12</div>
<div class="t ser" style="left:1152px;top:848px;font-size:13.5px;color:#e0e0e0">10</div>
<div class="t ser" style="left:1152px;top:876px;font-size:13.5px;color:#e0e0e0">8</div>
<div class="t ser" style="left:1152px;top:904px;font-size:13.5px;color:#e0e0e0">6</div>
<div class="t ser" style="left:1152px;top:932px;font-size:13.5px;color:#e0e0e0">4</div>
<div class="t ser" style="left:1152px;top:960px;font-size:13.5px;color:#e0e0e0">2</div>
<div class="t b" style="left:978px;top:949px;font-size:16px;color:#a0a0a0;letter-spacing:0px">hcfr.sourceforge.net</div>
<div class="t b" style="left:1725px;top:949px;font-size:16px;color:#a0a0a0;letter-spacing:0px">hcfr.sourceforge.net</div>
<svg style="left:402px;top:443px;overflow:hidden" width="740" height="562" viewBox="0 0 740 562"><polyline points="0,53 185,58 370,64 555,74 740,73" fill="none" stroke="#ffff00" stroke-width="2" shape-rendering="crispEdges"/><rect x="-4.0" y="49.0" width="8" height="8" fill="#ffff00"/><rect x="181.0" y="54.0" width="8" height="8" fill="#ffff00"/><rect x="366.0" y="60.0" width="8" height="8" fill="#ffff00"/><rect x="551.0" y="70.0" width="8" height="8" fill="#ffff00"/><rect x="736.0" y="69.0" width="8" height="8" fill="#ffff00"/><polyline points="0,132 185,128 370,128 555,127 740,124" fill="none" stroke="#00ffff" stroke-width="2" shape-rendering="crispEdges"/><rect x="-4.0" y="128.0" width="8" height="8" fill="#00ffff"/><rect x="181.0" y="124.0" width="8" height="8" fill="#00ffff"/><rect x="366.0" y="124.0" width="8" height="8" fill="#00ffff"/><rect x="551.0" y="123.0" width="8" height="8" fill="#00ffff"/><rect x="736.0" y="120.0" width="8" height="8" fill="#00ffff"/><polyline points="0,175 185,175.5 370,176 555,177 740,176" fill="none" stroke="#00ff00" stroke-width="2" shape-rendering="crispEdges"/><rect x="-4.0" y="171.0" width="8" height="8" fill="#00ff00"/><rect x="181.0" y="171.5" width="8" height="8" fill="#00ff00"/><rect x="366.0" y="172.0" width="8" height="8" fill="#00ff00"/><rect x="551.0" y="173.0" width="8" height="8" fill="#00ff00"/><rect x="736.0" y="172.0" width="8" height="8" fill="#00ff00"/><polyline points="0,417 185,421 370,420 555,423 740,411" fill="none" stroke="#ff00ff" stroke-width="2" shape-rendering="crispEdges"/><rect x="-4.0" y="413.0" width="8" height="8" fill="#ff00ff"/><rect x="181.0" y="417.0" width="8" height="8" fill="#ff00ff"/><rect x="366.0" y="416.0" width="8" height="8" fill="#ff00ff"/><rect x="551.0" y="419.0" width="8" height="8" fill="#ff00ff"/><rect x="736.0" y="407.0" width="8" height="8" fill="#ff00ff"/><polyline points="0,456 185,460 370,463 555,464 740,465" fill="none" stroke="#ff0000" stroke-width="2" shape-rendering="crispEdges"/><rect x="-4.0" y="452.0" width="8" height="8" fill="#ff0000"/><rect x="181.0" y="456.0" width="8" height="8" fill="#ff0000"/><rect x="366.0" y="459.0" width="8" height="8" fill="#ff0000"/><rect x="551.0" y="460.0" width="8" height="8" fill="#ff0000"/><rect x="736.0" y="461.0" width="8" height="8" fill="#ff0000"/><polyline points="0,528 185,528 370,528 555,527 740,520" fill="none" stroke="#0000ff" stroke-width="2" shape-rendering="crispEdges"/><rect x="-4.0" y="524.0" width="8" height="8" fill="#0000ff"/><rect x="181.0" y="524.0" width="8" height="8" fill="#0000ff"/><rect x="366.0" y="524.0" width="8" height="8" fill="#0000ff"/><rect x="551.0" y="523.0" width="8" height="8" fill="#0000ff"/><rect x="736.0" y="516.0" width="8" height="8" fill="#0000ff"/><polyline points="0,42 185,44 370,43 555,40 740,40" fill="none" stroke="#808000" stroke-width="1" stroke-dasharray="3 3" shape-rendering="crispEdges"/><rect x="-4.0" y="38.0" width="8" height="8" fill="#808000"/><rect x="181.0" y="40.0" width="8" height="8" fill="#808000"/><rect x="366.0" y="39.0" width="8" height="8" fill="#808000"/><rect x="551.0" y="36.0" width="8" height="8" fill="#808000"/><rect x="736.0" y="36.0" width="8" height="8" fill="#808000"/><polyline points="0,125.5 185,125 370,127 555,122 740,119" fill="none" stroke="#008080" stroke-width="1" stroke-dasharray="3 3" shape-rendering="crispEdges"/><rect x="-4.0" y="121.5" width="8" height="8" fill="#008080"/><rect x="181.0" y="121.0" width="8" height="8" fill="#008080"/><rect x="366.0" y="123.0" width="8" height="8" fill="#008080"/><rect x="551.0" y="118.0" width="8" height="8" fill="#008080"/><rect x="736.0" y="115.0" width="8" height="8" fill="#008080"/><polyline points="0,171 185,168 370,166 555,162 740,160" fill="none" stroke="#008000" stroke-width="1" stroke-dasharray="3 3" shape-rendering="crispEdges"/><rect x="-4.0" y="167.0" width="8" height="8" fill="#008000"/><rect x="181.0" y="164.0" width="8" height="8" fill="#008000"/><rect x="366.0" y="162.0" width="8" height="8" fill="#008000"/><rect x="551.0" y="158.0" width="8" height="8" fill="#008000"/><rect x="736.0" y="156.0" width="8" height="8" fill="#008000"/><polyline points="0,417 185,416 370,415 555,412 740,401" fill="none" stroke="#800080" stroke-width="1" stroke-dasharray="3 3" shape-rendering="crispEdges"/><rect x="-4.0" y="413.0" width="8" height="8" fill="#800080"/><rect x="181.0" y="412.0" width="8" height="8" fill="#800080"/><rect x="366.0" y="411.0" width="8" height="8" fill="#800080"/><rect x="551.0" y="408.0" width="8" height="8" fill="#800080"/><rect x="736.0" y="397.0" width="8" height="8" fill="#800080"/><polyline points="0,455.5 185,454 370,452 555,449 740,442" fill="none" stroke="#800000" stroke-width="1" stroke-dasharray="3 3" shape-rendering="crispEdges"/><rect x="-4.0" y="451.5" width="8" height="8" fill="#800000"/><rect x="181.0" y="450.0" width="8" height="8" fill="#800000"/><rect x="366.0" y="448.0" width="8" height="8" fill="#800000"/><rect x="551.0" y="445.0" width="8" height="8" fill="#800000"/><rect x="736.0" y="438.0" width="8" height="8" fill="#800000"/><polyline points="0,528 185,528 370,528 555,527 740,520" fill="none" stroke="#000080" stroke-width="1" stroke-dasharray="3 3" shape-rendering="crispEdges"/><rect x="-4.0" y="524.0" width="8" height="8" fill="#000080"/><rect x="181.0" y="524.0" width="8" height="8" fill="#000080"/><rect x="366.0" y="524.0" width="8" height="8" fill="#000080"/><rect x="551.0" y="523.0" width="8" height="8" fill="#000080"/><rect x="736.0" y="516.0" width="8" height="8" fill="#000080"/></svg>
<svg style="left:1150px;top:443px;overflow:hidden" width="740" height="562" viewBox="0 0 740 562"><rect x="0" y="140" width="740" height="1" fill="#fff"/><line x1="0" y1="140.5" x2="740" y2="140.5" stroke="#000" stroke-width="1" stroke-dasharray="3 3" shape-rendering="crispEdges"/><polyline points="0,153 185,171 370,167 555,153 740,122" fill="none" stroke="#ff0000" stroke-width="2" shape-rendering="crispEdges"/><rect x="-4.0" y="149.0" width="8" height="8" fill="#ff0000"/><rect x="181.0" y="167.0" width="8" height="8" fill="#ff0000"/><rect x="366.0" y="163.0" width="8" height="8" fill="#ff0000"/><rect x="551.0" y="149.0" width="8" height="8" fill="#ff0000"/><rect x="736.0" y="118.0" width="8" height="8" fill="#ff0000"/><polyline points="0,146 185,146 370,148 555,143 740,120" fill="none" stroke="#00ff00" stroke-width="2" shape-rendering="crispEdges"/><rect x="-4.0" y="142.0" width="8" height="8" fill="#00ff00"/><rect x="181.0" y="142.0" width="8" height="8" fill="#00ff00"/><rect x="366.0" y="144.0" width="8" height="8" fill="#00ff00"/><rect x="551.0" y="139.0" width="8" height="8" fill="#00ff00"/><rect x="736.0" y="116.0" width="8" height="8" fill="#00ff00"/><polyline points="0,135 185,128 370,143 555,141 740,143" fill="none" stroke="#0000ff" stroke-width="2" shape-rendering="crispEdges"/><rect x="-4.0" y="131.0" width="8" height="8" fill="#0000ff"/><rect x="181.0" y="124.0" width="8" height="8" fill="#0000ff"/><rect x="366.0" y="139.0" width="8" height="8" fill="#0000ff"/><rect x="551.0" y="137.0" width="8" height="8" fill="#0000ff"/><rect x="736.0" y="139.0" width="8" height="8" fill="#0000ff"/><polyline points="0,152 185,146 370,158 555,145 740,114" fill="none" stroke="#ffff00" stroke-width="2" shape-rendering="crispEdges"/><rect x="-4.0" y="148.0" width="8" height="8" fill="#ffff00"/><rect x="181.0" y="142.0" width="8" height="8" fill="#ffff00"/><rect x="366.0" y="154.0" width="8" height="8" fill="#ffff00"/><rect x="551.0" y="141.0" width="8" height="8" fill="#ffff00"/><rect x="736.0" y="110.0" width="8" height="8" fill="#ffff00"/><polyline points="0,106 185,118 370,125 555,141 740,133" fill="none" stroke="#00ffff" stroke-width="2" shape-rendering="crispEdges"/><rect x="-4.0" y="102.0" width="8" height="8" fill="#00ffff"/><rect x="181.0" y="114.0" width="8" height="8" fill="#00ffff"/><rect x="366.0" y="121.0" width="8" height="8" fill="#00ffff"/><rect x="551.0" y="137.0" width="8" height="8" fill="#00ffff"/><rect x="736.0" y="129.0" width="8" height="8" fill="#00ffff"/><polyline points="0,132 185,130 370,122 555,117 740,118" fill="none" stroke="#ff00ff" stroke-width="2" shape-rendering="crispEdges"/><rect x="-4.0" y="128.0" width="8" height="8" fill="#ff00ff"/><rect x="181.0" y="126.0" width="8" height="8" fill="#ff00ff"/><rect x="366.0" y="118.0" width="8" height="8" fill="#ff00ff"/><rect x="551.0" y="113.0" width="8" height="8" fill="#ff00ff"/><rect x="736.0" y="114.0" width="8" height="8" fill="#ff00ff"/><polyline points="0,534 185,529 370,522 555,515 740,495" fill="none" stroke="#ff0000" stroke-width="2" shape-rendering="crispEdges"/><rect x="-4.0" y="530.0" width="8" height="8" fill="#ff0000"/><rect x="181.0" y="525.0" width="8" height="8" fill="#ff0000"/><rect x="366.0" y="518.0" width="8" height="8" fill="#ff0000"/><rect x="551.0" y="511.0" width="8" height="8" fill="#ff0000"/><rect x="736.0" y="491.0" width="8" height="8" fill="#ff0000"/><polyline points="0,531 185,552 370,549 555,549 740,545" fill="none" stroke="#00ff00" stroke-width="2" shape-rendering="crispEdges"/><rect x="-4.0" y="527.0" width="8" height="8" fill="#00ff00"/><rect x="181.0" y="548.0" width="8" height="8" fill="#00ff00"/><rect x="366.0" y="545.0" width="8" height="8" fill="#00ff00"/><rect x="551.0" y="545.0" width="8" height="8" fill="#00ff00"/><rect x="736.0" y="541.0" width="8" height="8" fill="#00ff00"/><polyline points="0,547 185,547 370,553 555,553 740,549" fill="none" stroke="#0000ff" stroke-width="2" shape-rendering="crispEdges"/><rect x="-4.0" y="543.0" width="8" height="8" fill="#0000ff"/><rect x="181.0" y="543.0" width="8" height="8" fill="#0000ff"/><rect x="366.0" y="549.0" width="8" height="8" fill="#0000ff"/><rect x="551.0" y="549.0" width="8" height="8" fill="#0000ff"/><rect x="736.0" y="545.0" width="8" height="8" fill="#0000ff"/><polyline points="0,526 185,535 370,533 555,524 740,526" fill="none" stroke="#ffff00" stroke-width="2" shape-rendering="crispEdges"/><rect x="-4.0" y="522.0" width="8" height="8" fill="#ffff00"/><rect x="181.0" y="531.0" width="8" height="8" fill="#ffff00"/><rect x="366.0" y="529.0" width="8" height="8" fill="#ffff00"/><rect x="551.0" y="520.0" width="8" height="8" fill="#ffff00"/><rect x="736.0" y="522.0" width="8" height="8" fill="#ffff00"/><polyline points="0,534 185,541 370,540 555,545 740,555" fill="none" stroke="#00ffff" stroke-width="2" shape-rendering="crispEdges"/><rect x="-4.0" y="530.0" width="8" height="8" fill="#00ffff"/><rect x="181.0" y="537.0" width="8" height="8" fill="#00ffff"/><rect x="366.0" y="536.0" width="8" height="8" fill="#00ffff"/><rect x="551.0" y="541.0" width="8" height="8" fill="#00ffff"/><rect x="736.0" y="551.0" width="8" height="8" fill="#00ffff"/><polyline points="0,533 185,532 370,532 555,524 740,538" fill="none" stroke="#ff00ff" stroke-width="2" shape-rendering="crispEdges"/><rect x="-4.0" y="529.0" width="8" height="8" fill="#ff00ff"/><rect x="181.0" y="528.0" width="8" height="8" fill="#ff00ff"/><rect x="366.0" y="528.0" width="8" height="8" fill="#ff00ff"/><rect x="551.0" y="520.0" width="8" height="8" fill="#ff00ff"/><rect x="736.0" y="534.0" width="8" height="8" fill="#ff00ff"/><rect x="-4.0" y="136.0" width="8" height="8" fill="#e8e8e8"/><rect x="736.0" y="136.0" width="8" height="8" fill="#e8e8e8"/></svg>
<div class="a" style="left:19px;top:1030px;width:1826px;height:2px;background:#8a8a8a"></div>
<div class="a" style="left:0;top:1041px;width:1920px;height:1px;background:#000"></div>
<div class="a" style="left:0;top:1042px;width:1920px;height:19px;background:#f0f0f0"></div>
<div class="a" style="left:0;top:1060px;width:322px;height:1px;background:#000"></div>
<div class="a" style="left:1px;top:1043px;width:16px;height:16px;background:#f0f0f0;border-top:1px solid #fff;border-left:1px solid #fff;border-right:1px solid #777;border-bottom:1px solid #777"></div>
<div class="a" style="left:18px;top:1043px;width:16px;height:16px;background:#f0f0f0;border-top:1px solid #fff;border-left:1px solid #fff;border-right:1px solid #777;border-bottom:1px solid #777"></div>
<div class="a" style="left:35px;top:1043px;width:16px;height:16px;background:#f0f0f0;border-top:1px solid #fff;border-left:1px solid #fff;border-right:1px solid #777;border-bottom:1px solid #777"></div>
<div class="a" style="left:52px;top:1042px;width:2px;height:18px;background:#000"></div>
<svg style="left:5px;top:1047px" width="9" height="9"><path d="M0.5 0.5L8 8M8 0.5L0.5 8" stroke="#000" stroke-width="1.3"/></svg>
<svg style="left:23px;top:1047px" width="5" height="8"><path d="M4 0V8L0 4Z" fill="#000"/></svg>
<svg style="left:41px;top:1047px" width="5" height="8"><path d="M0 0V8L4 4Z" fill="#000"/></svg>
<svg style="left:0;top:1042px" width="340" height="19" shape-rendering="crispEdges"><path d="M239 0 L247 18 L314 18 L322 0" fill="#f0f0f0" stroke="#000" stroke-width="1.2" shape-rendering="auto"/><path d="M171 0 L179 18 L234 18 L242 0" fill="#f0f0f0" stroke="#000" stroke-width="1.2" shape-rendering="auto"/><path d="M120 0 L128 18 L170 18 L178 0" fill="#f0f0f0" stroke="#000" stroke-width="1.2" shape-rendering="auto"/><path d="M55 0 L63 18 L119 18 L127 0" fill="#fff" stroke="#000" stroke-width="1.2" shape-rendering="auto"/></svg>
<div class="t b" style="left:67px;top:1047px;font-size:10.8px;color:#000">Measures</div>
<div class="t" style="left:132px;top:1047px;font-size:10px;color:#222;letter-spacing:-0.3px">Gamma</div>
<div class="t" style="left:186px;top:1047px;font-size:10px;color:#222;letter-spacing:-0.4px">Luminance</div>
<div class="t" style="left:255px;top:1047px;font-size:10px;color:#222;letter-spacing:-0.35px">RGB Levels</div>
<svg style="left:1751px;top:1043px" width="14" height="15"><path d="M1 1H13V9Q13 14 7 14Q1 14 1 9Z" fill="#c8c000" stroke="#555" stroke-width="0.8"/><rect x="3" y="3" width="6" height="5" fill="#e02020"/></svg>
<div class="a" style="left:1846px;top:1044px;width:12px;height:12px;background:#fff;border-top:1px solid #777;border-left:1px solid #777;border-right:1px solid #ddd;border-bottom:1px solid #ddd"></div>
<div class="t" style="left:1865px;top:1046px;font-size:11px;color:#000">Reference</div>
<div class="a" style="left:0;top:1061px;width:1920px;height:19px;background:#e6ecf6"></div>
<div class="t" style="left:3px;top:1066px;font-size:11.5px;color:#111">Ready</div>
<div class="a" style="left:1742px;top:1063px;width:74px;height:17px;border-top:1px solid #a6b3c8;border-left:1px solid #a6b3c8;background:#eaf0f8"></div>
<div class="a" style="left:1820px;top:1063px;width:28px;height:17px;border-top:1px solid #a6b3c8;border-left:1px solid #a6b3c8;background:#eaf0f8"></div>
<div class="a" style="left:1851px;top:1063px;width:36px;height:17px;border-top:1px solid #a6b3c8;border-left:1px solid #a6b3c8;background:#eaf0f8"></div>
<div class="a" style="left:1889px;top:1063px;width:31px;height:17px;border-top:1px solid #a6b3c8;border-left:1px solid #a6b3c8;background:#eaf0f8"></div>
<div class="t" style="left:1853px;top:1066px;font-size:11.5px;color:#111">NUM</div>
</body></html>
